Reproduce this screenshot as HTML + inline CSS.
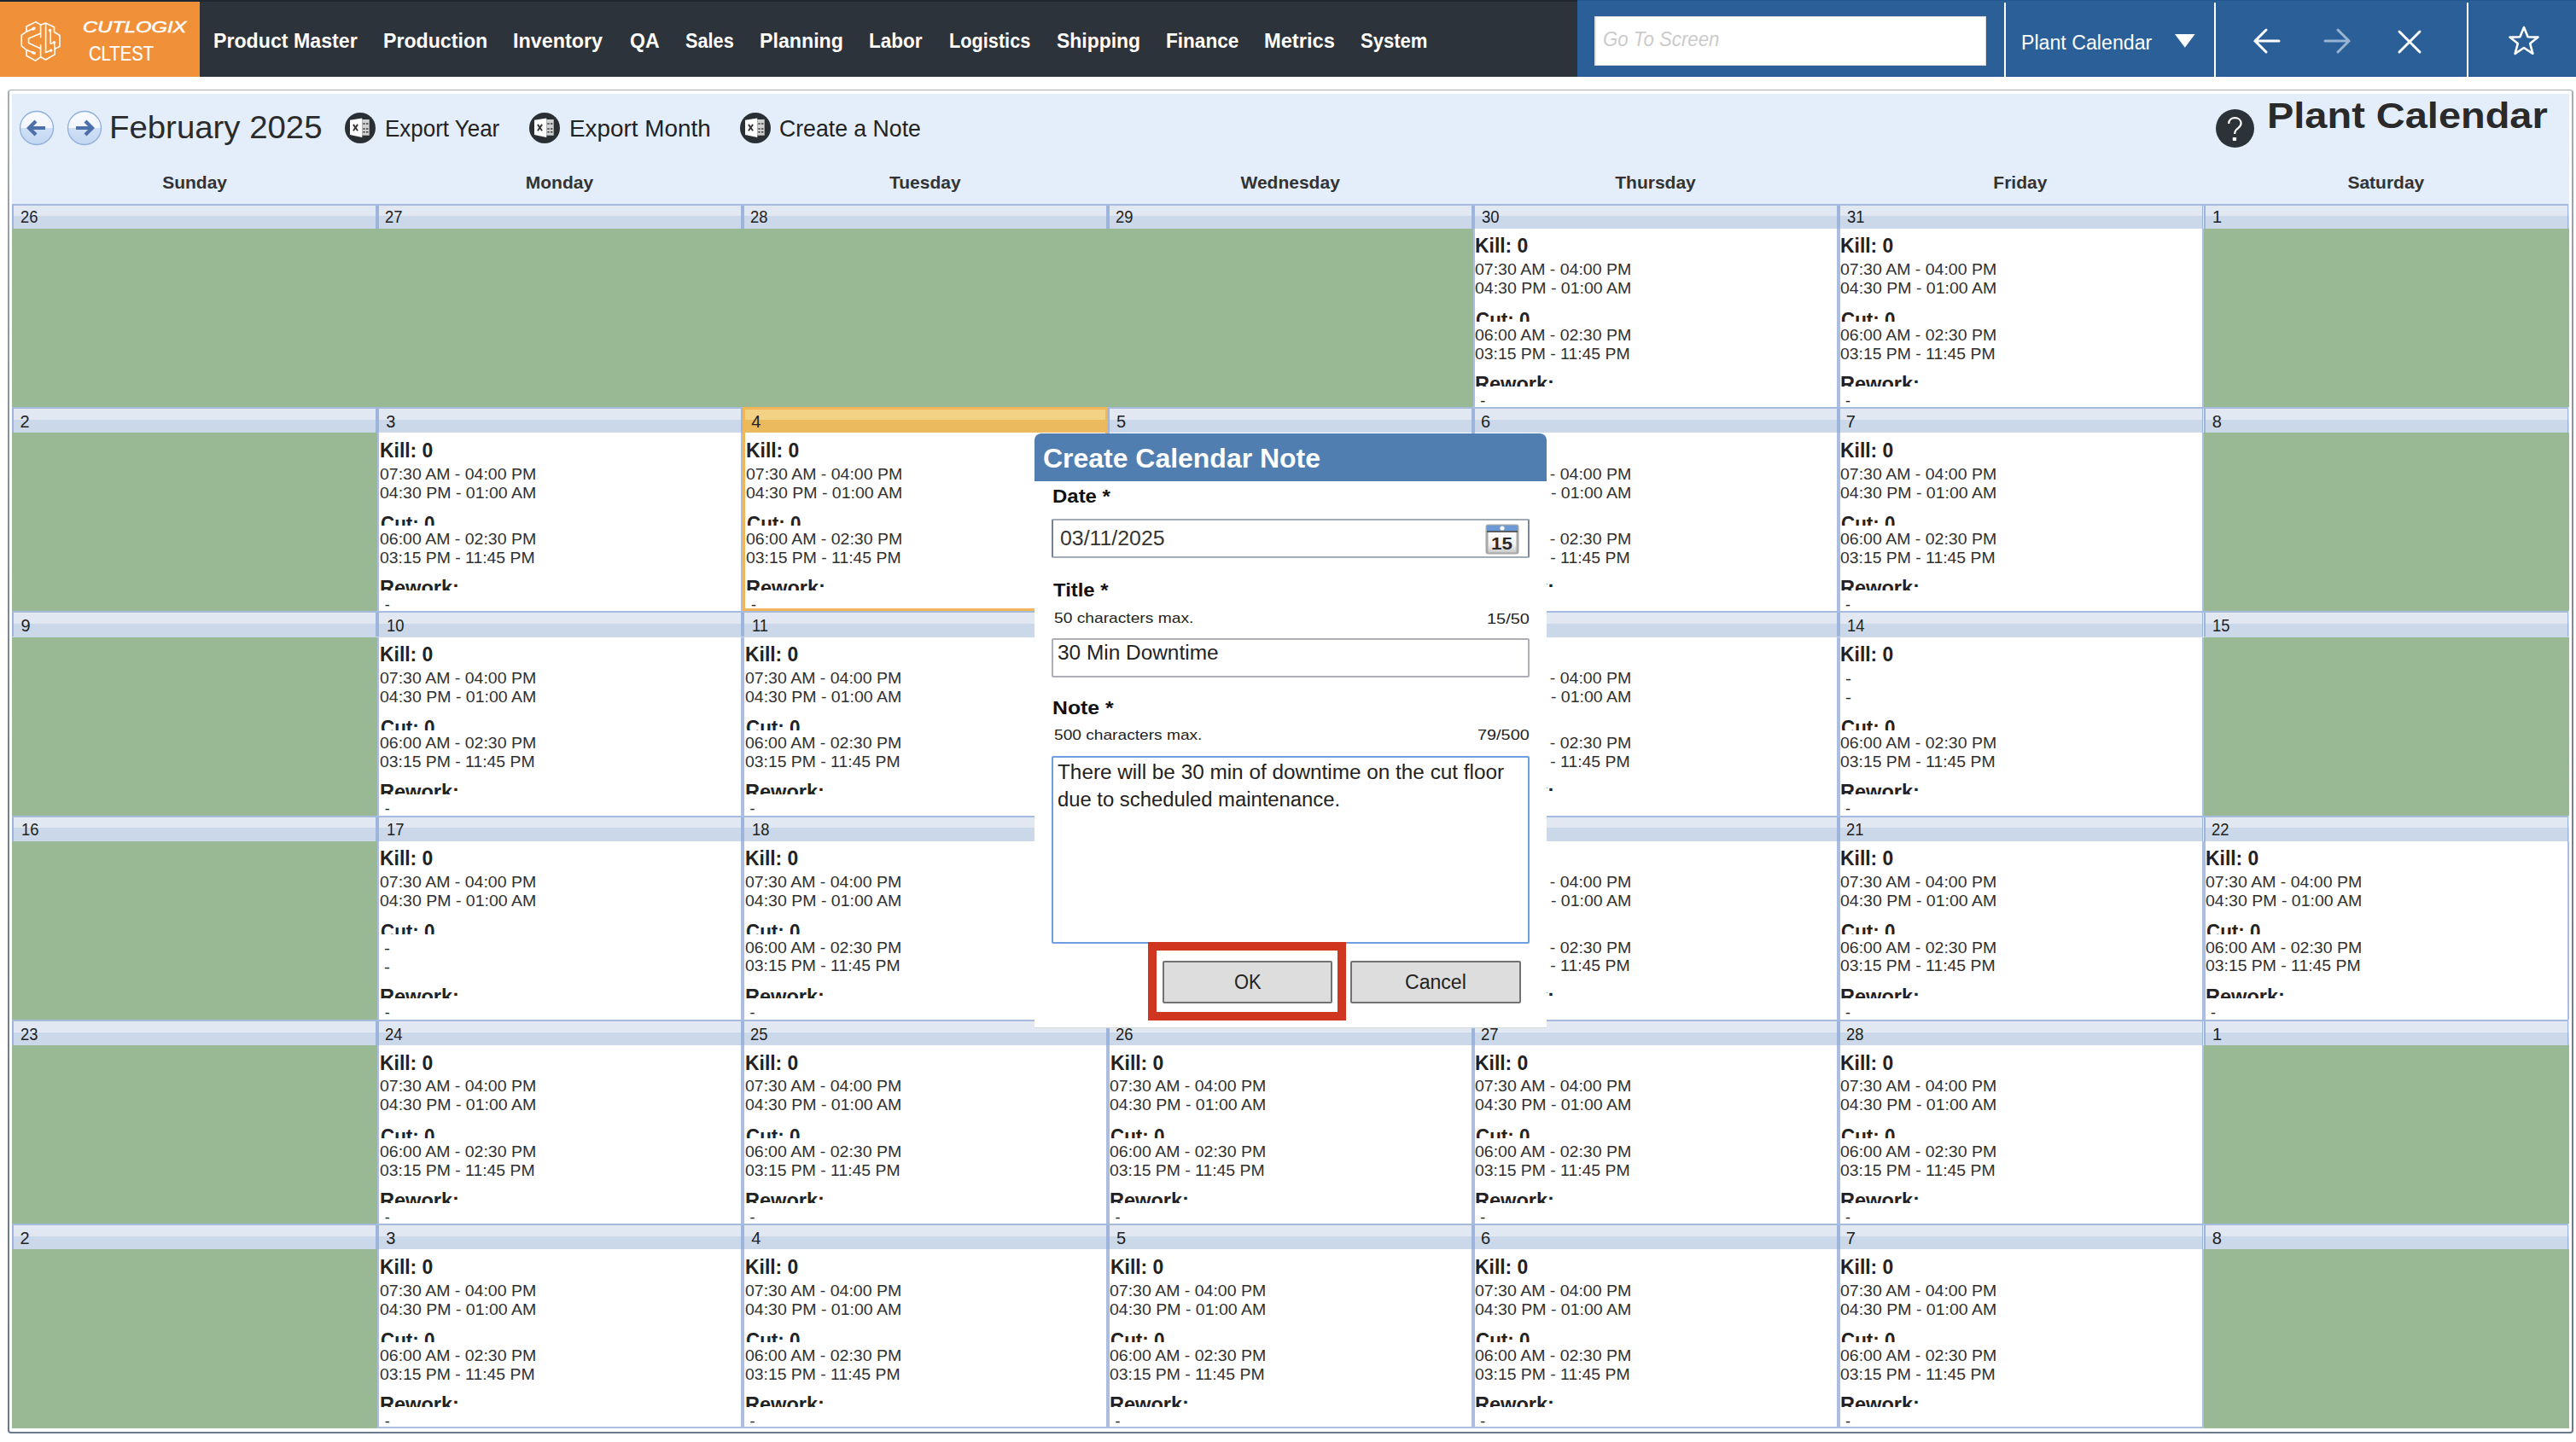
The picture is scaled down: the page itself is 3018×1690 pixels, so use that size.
<!DOCTYPE html>
<html><head><meta charset="utf-8"><title>Plant Calendar</title>
<style>
html,body{margin:0;padding:0;}
body{width:3018px;height:1690px;position:relative;overflow:hidden;background:#fff;font-family:'Liberation Sans',sans-serif;}
span{position:absolute;white-space:nowrap;transform-origin:0 0;}
div.c{position:absolute;overflow:hidden;}
</style></head><body>
<div style="position:absolute;left:0;top:0;width:3018px;height:90px;background:#2d333a"></div>
<div style="position:absolute;left:1848px;top:0;width:1170px;height:90px;background:#2b5f98"></div>
<div style="position:absolute;left:0;top:0;width:1848px;height:1.5px;background:#20262d"></div>
<div style="position:absolute;left:0;top:0;width:234px;height:2px;background:#1b2633"></div>
<div style="position:absolute;left:1848px;top:0;width:1170px;height:1px;background:#255791"></div>
<div style="position:absolute;left:1848px;top:89px;width:1170px;height:1px;background:#23558f"></div>
<div style="position:absolute;left:0;top:2px;width:234px;height:88px;background:#f0913a"></div>
<svg style="position:absolute;left:18px;top:20px" width="60" height="58" viewBox="0 0 60 58" fill="none" stroke="#fff" stroke-width="1.6" stroke-linejoin="round" stroke-linecap="round">
<path d="M24,5.6 L13,11 L13,17.2 L7.25,21.1 L7.25,33.8 L13,38.5 L13,45.3 L23.5,51.1 L29.6,46.8 L35.4,50 L46.2,43.9 L46.2,37.4 L52,34.5 L52,21.5 L45.5,17.5 L45.5,11.7 L35.4,7.05 L29.6,9.2 L24,5.6"/>
<path d="M29.6,9.2 V23.7 M29.6,32.7 V46.8"/>
<path d="M29.3,19.3 L15.6,25.1 L15.6,30.5 L29.3,36.7"/>
<path d="M13,17.2 L20.5,13.8 M13,38.5 L20.8,41.8"/>
<path d="M35.6,8.1 V41.4 L41.3,39.3"/>
<path d="M41.2,16 V31.2 L45.5,29.8 L46.2,37.4"/>
<g fill="#fff" stroke="none"><ellipse cx="21.3" cy="13.6" rx="2.6" ry="1.7" transform="rotate(-25 21.3 13.6)"/><ellipse cx="21.5" cy="42" rx="2.6" ry="1.7" transform="rotate(25 21.5 42)"/><circle cx="40.6" cy="15.5" r="1.8"/><circle cx="45.5" cy="29.6" r="1.7"/><circle cx="41.8" cy="39.1" r="1.7"/></g>
</svg>
<span style="left:97.18px;top:22.96px;font:italic normal 18px/18px 'Liberation Sans';color:#fff;transform:scaleX(1.3184);-webkit-text-stroke:0.5px #fff;">CUTLOGIX</span>
<span style="left:103.74px;top:52.02px;font:normal normal 23.6px/23.6px 'Liberation Sans';color:#fff;transform:scaleX(0.8569);-webkit-text-stroke:0.2px #fff;">CLTEST</span>
<span style="left:249.89px;top:36.53px;font:normal bold 23px/23px 'Liberation Sans';color:#fff;transform:scaleX(1.0074);">Product Master</span>
<span style="left:448.59px;top:36.53px;font:normal bold 23px/23px 'Liberation Sans';color:#fff;transform:scaleX(1.0065);">Production</span>
<span style="left:600.68px;top:36.53px;font:normal bold 23px/23px 'Liberation Sans';color:#fff;transform:scaleX(1.0153);">Inventory</span>
<span style="left:738.00px;top:36.53px;font:normal bold 23px/23px 'Liberation Sans';color:#fff;transform:scaleX(1.0032);">QA</span>
<span style="left:803.00px;top:36.53px;font:normal bold 23px/23px 'Liberation Sans';color:#fff;transform:scaleX(0.9441);">Sales</span>
<span style="left:889.59px;top:36.53px;font:normal bold 23px/23px 'Liberation Sans';color:#fff;transform:scaleX(1.0088);">Planning</span>
<span style="left:1017.92px;top:36.53px;font:normal bold 23px/23px 'Liberation Sans';color:#fff;transform:scaleX(0.9787);">Labor</span>
<span style="left:1111.86px;top:36.53px;font:normal bold 23px/23px 'Liberation Sans';color:#fff;transform:scaleX(0.9438);">Logistics</span>
<span style="left:1237.60px;top:36.53px;font:normal bold 23px/23px 'Liberation Sans';color:#fff;transform:scaleX(0.9967);">Shipping</span>
<span style="left:1366.02px;top:36.53px;font:normal bold 23px/23px 'Liberation Sans';color:#fff;transform:scaleX(0.9821);">Finance</span>
<span style="left:1480.97px;top:36.53px;font:normal bold 23px/23px 'Liberation Sans';color:#fff;transform:scaleX(1.0287);">Metrics</span>
<span style="left:1594.00px;top:36.53px;font:normal bold 23px/23px 'Liberation Sans';color:#fff;transform:scaleX(0.9585);">System</span>
<div style="position:absolute;left:1868px;top:19px;width:459px;height:58px;background:#fff;box-sizing:border-box;border:1px solid #d8d8d8;border-left:2px solid #e0e0e0"></div>
<span style="left:1878.08px;top:33.73px;font:italic normal 24.3px/24.3px 'Liberation Sans';color:#cbcbcb;transform:scaleX(0.9152);">Go To Screen</span>
<div style="position:absolute;left:2347.5px;top:3px;width:2px;height:87px;background:#fff"></div>
<div style="position:absolute;left:2593.5px;top:3px;width:2px;height:87px;background:#fff"></div>
<div style="position:absolute;left:2889.5px;top:3px;width:2px;height:87px;background:#fff"></div>
<span style="left:2367.99px;top:38.53px;font:normal normal 23px/23px 'Liberation Sans';color:#fff;transform:scaleX(1.0073);">Plant Calendar</span>
<svg style="position:absolute;left:2546px;top:39px" width="28" height="18"><path d="M2,1 L25.6,1 L13.8,16.8 Z" fill="#fff"/></svg>
<svg style="position:absolute;left:2636px;top:28px" width="40" height="40" viewBox="0 0 40 40" fill="none" stroke="#fff" stroke-width="3" stroke-linecap="round"><path d="M34,20 L6,20 M19,7 L6,20 L19,33"/></svg>
<svg style="position:absolute;left:2719px;top:28px" width="40" height="40" viewBox="0 0 40 40" fill="none" stroke="#98b4d2" stroke-width="3" stroke-linecap="round"><path d="M5,20 L33,20 M20,7 L33,20 L20,33"/></svg>
<svg style="position:absolute;left:2803px;top:29px" width="40" height="40" viewBox="0 0 40 40" fill="none" stroke="#fff" stroke-width="3" stroke-linecap="round"><path d="M8,8 L32,32 M32,8 L8,32"/></svg>
<svg style="position:absolute;left:2937px;top:29px" width="40" height="38" viewBox="0 0 40 38" fill="none" stroke="#fff" stroke-width="2.6" stroke-linejoin="round"><path d="M20,3 L24.6,14.2 L36.5,14.6 L27.2,22 L30.4,33.8 L20,27 L9.6,33.8 L12.8,22 L3.5,14.6 L15.4,14.2 Z"/></svg>
<div style="position:absolute;left:8.5px;top:104.7px;width:3006.5px;height:1575px;border-radius:4px;background:linear-gradient(#a7aeb9,#8f9aa7 15%,#76828f 50%,#687a8c)"></div>
<div style="position:absolute;left:10.6px;top:106.4px;width:3002.4px;height:1571.3px;border-radius:2px;background:#fff"></div>
<div style="position:absolute;left:14px;top:110px;width:2995.5px;height:1564px;background:#e4eefb"></div>
<svg style="position:absolute;left:21.5px;top:129px" width="42" height="42" viewBox="0 0 42 42">
<defs><linearGradient id="g42.5" x1="0" y1="0" x2="0" y2="1"><stop offset="0" stop-color="#f7fafe"/><stop offset="0.5" stop-color="#f2f6fc"/><stop offset="0.5" stop-color="#cfe0f6"/><stop offset="1" stop-color="#c3d7f2"/></linearGradient></defs>
<circle cx="21" cy="21" r="19.5" fill="url(#g42.5)" stroke="#8eaedb" stroke-width="1.3"/>
<path d="M31,21 L12,21 M20,13 L12,21 L20,29" fill="none" stroke="#4d70aa" stroke-width="4.2" stroke-linejoin="miter"/></svg>
<svg style="position:absolute;left:77.5px;top:129px" width="42" height="42" viewBox="0 0 42 42">
<defs><linearGradient id="g98.5" x1="0" y1="0" x2="0" y2="1"><stop offset="0" stop-color="#f7fafe"/><stop offset="0.5" stop-color="#f2f6fc"/><stop offset="0.5" stop-color="#cfe0f6"/><stop offset="1" stop-color="#c3d7f2"/></linearGradient></defs>
<circle cx="21" cy="21" r="19.5" fill="url(#g98.5)" stroke="#8eaedb" stroke-width="1.3"/>
<path d="M11,21 L30,21 M22,13 L30,21 L22,29" fill="none" stroke="#4d70aa" stroke-width="4.2" stroke-linejoin="miter"/></svg>
<span style="left:127.89px;top:130.58px;font:normal normal 37px/37px 'Liberation Sans';color:#2b2b2b;transform:scaleX(1.0368);">February 2025</span>
<svg style="position:absolute;left:404px;top:132.10000000000002px" width="36" height="36" viewBox="0 0 36 36">
<circle cx="18" cy="18" r="18" fill="#2a2f33"/>
<path d="M6,8.7 L20.3,6.4 L20.3,29 L6,26 Z" fill="#fff"/>
<rect x="20.3" y="8" width="8.4" height="18.7" fill="#d0d0d0"/>
<path d="M21.3,13 h2.4 M25,13 h2.4 M21.3,19 h2.4 M25,19 h2.4 M21.3,22.7 h2.4 M25,22.7 h2.4" stroke="#3a3a3a" stroke-width="1.6"/>
<path d="M9.9,13.9 L15.1,21.2 M15.1,13.9 L9.9,21.2" stroke="#333" stroke-width="1.9"/>
</svg>
<span style="left:450.71px;top:137.02px;font:normal normal 27.5px/27.5px 'Liberation Sans';color:#222;transform:scaleX(0.9443);">Export Year</span>
<svg style="position:absolute;left:619.7px;top:132.10000000000002px" width="36" height="36" viewBox="0 0 36 36">
<circle cx="18" cy="18" r="18" fill="#2a2f33"/>
<path d="M6,8.7 L20.3,6.4 L20.3,29 L6,26 Z" fill="#fff"/>
<rect x="20.3" y="8" width="8.4" height="18.7" fill="#d0d0d0"/>
<path d="M21.3,13 h2.4 M25,13 h2.4 M21.3,19 h2.4 M25,19 h2.4 M21.3,22.7 h2.4 M25,22.7 h2.4" stroke="#3a3a3a" stroke-width="1.6"/>
<path d="M9.9,13.9 L15.1,21.2 M15.1,13.9 L9.9,21.2" stroke="#333" stroke-width="1.9"/>
</svg>
<span style="left:666.67px;top:137.02px;font:normal normal 27.5px/27.5px 'Liberation Sans';color:#222;transform:scaleX(1.0128);">Export Month</span>
<svg style="position:absolute;left:866.5px;top:132.10000000000002px" width="36" height="36" viewBox="0 0 36 36">
<circle cx="18" cy="18" r="18" fill="#2a2f33"/>
<path d="M6,8.7 L20.3,6.4 L20.3,29 L6,26 Z" fill="#fff"/>
<rect x="20.3" y="8" width="8.4" height="18.7" fill="#d0d0d0"/>
<path d="M21.3,13 h2.4 M25,13 h2.4 M21.3,19 h2.4 M25,19 h2.4 M21.3,22.7 h2.4 M25,22.7 h2.4" stroke="#3a3a3a" stroke-width="1.6"/>
<path d="M9.9,13.9 L15.1,21.2 M15.1,13.9 L9.9,21.2" stroke="#333" stroke-width="1.9"/>
</svg>
<span style="left:913.33px;top:137.02px;font:normal normal 27.5px/27.5px 'Liberation Sans';color:#222;transform:scaleX(0.9688);">Create a Note</span>
<div style="position:absolute;left:2596px;top:127.5px;width:45px;height:45px;border-radius:50%;background:#2c3338"></div>
<svg style="position:absolute;left:2596px;top:127.5px" width="45" height="45" viewBox="0 0 45 45" fill="none" stroke="#fff" stroke-width="2.2"><path d="M15.2,17 C15.2,12.5 18.5,10.2 22.3,10.2 C26.5,10.2 29.6,12.8 29.6,16.6 C29.6,20.5 26,22 24,24 C22.6,25.4 22.2,26.5 22.2,29"/><rect x="19.8" y="33" width="4.3" height="3.9" rx="0.6" fill="#fff" stroke="none"/></svg>
<span style="left:2656.46px;top:115.05px;font:normal bold 42px/42px 'Liberation Sans';color:#2a2a2a;transform:scaleX(1.1178);">Plant Calendar</span>
<span style="left:190.15px;top:202.52px;font:normal bold 21px/21px 'Liberation Sans';color:#333;">Sunday</span>
<span style="left:615.76px;top:202.52px;font:normal bold 21px/21px 'Liberation Sans';color:#333;">Monday</span>
<span style="left:1041.97px;top:202.52px;font:normal bold 21px/21px 'Liberation Sans';color:#333;">Tuesday</span>
<span style="left:1453.49px;top:202.52px;font:normal bold 21px/21px 'Liberation Sans';color:#333;">Wednesday</span>
<span style="left:1892.25px;top:202.52px;font:normal bold 21px/21px 'Liberation Sans';color:#333;">Thursday</span>
<span style="left:2335.36px;top:202.52px;font:normal bold 21px/21px 'Liberation Sans';color:#333;">Friday</span>
<span style="left:2750.39px;top:202.52px;font:normal bold 21px/21px 'Liberation Sans';color:#333;">Saturday</span>
<div style="position:absolute;left:14.3px;top:238.5px;width:2995px;height:2px;background:#a5badd"></div>
<div style="position:absolute;left:14.3px;top:240.5px;width:427.9px;height:12.0px;background:#e1e8f2"></div>
<div style="position:absolute;left:14.3px;top:252.5px;width:427.9px;height:15.5px;background:#cbd8ea"></div>
<div style="position:absolute;left:14.3px;top:240.5px;width:2px;height:27.5px;background:#9db4dc"></div>
<div style="position:absolute;left:440.4px;top:240.5px;width:1.8px;height:27.5px;background:#9db4dc"></div>
<div style="position:absolute;left:14.3px;top:268.0px;width:427.9px;height:209.1px;background:#99b894"></div>
<span style="left:23.58px;top:244.47px;font:normal normal 20px/20px 'Liberation Sans';color:#222;transform:scaleX(0.9200);">26</span>
<div style="position:absolute;left:442.2px;top:240.5px;width:427.9px;height:12.0px;background:#e1e8f2"></div>
<div style="position:absolute;left:442.2px;top:252.5px;width:427.9px;height:15.5px;background:#cbd8ea"></div>
<div style="position:absolute;left:442.2px;top:240.5px;width:2px;height:27.5px;background:#9db4dc"></div>
<div style="position:absolute;left:868.2px;top:240.5px;width:1.8px;height:27.5px;background:#9db4dc"></div>
<div style="position:absolute;left:442.2px;top:268.0px;width:427.9px;height:209.1px;background:#99b894"></div>
<span style="left:451.44px;top:244.47px;font:normal normal 20px/20px 'Liberation Sans';color:#222;transform:scaleX(0.9200);">27</span>
<div style="position:absolute;left:870.0px;top:240.5px;width:427.9px;height:12.0px;background:#e1e8f2"></div>
<div style="position:absolute;left:870.0px;top:252.5px;width:427.9px;height:15.5px;background:#cbd8ea"></div>
<div style="position:absolute;left:870.0px;top:240.5px;width:2px;height:27.5px;background:#9db4dc"></div>
<div style="position:absolute;left:1296.1px;top:240.5px;width:1.8px;height:27.5px;background:#9db4dc"></div>
<div style="position:absolute;left:870.0px;top:268.0px;width:427.9px;height:209.1px;background:#99b894"></div>
<span style="left:879.30px;top:244.47px;font:normal normal 20px/20px 'Liberation Sans';color:#222;transform:scaleX(0.9200);">28</span>
<div style="position:absolute;left:1297.9px;top:240.5px;width:427.9px;height:12.0px;background:#e1e8f2"></div>
<div style="position:absolute;left:1297.9px;top:252.5px;width:427.9px;height:15.5px;background:#cbd8ea"></div>
<div style="position:absolute;left:1297.9px;top:240.5px;width:2px;height:27.5px;background:#9db4dc"></div>
<div style="position:absolute;left:1723.9px;top:240.5px;width:1.8px;height:27.5px;background:#9db4dc"></div>
<div style="position:absolute;left:1297.9px;top:268.0px;width:427.9px;height:209.1px;background:#99b894"></div>
<span style="left:1307.16px;top:244.47px;font:normal normal 20px/20px 'Liberation Sans';color:#222;transform:scaleX(0.9200);">29</span>
<div style="position:absolute;left:1725.7px;top:240.5px;width:427.9px;height:12.0px;background:#e1e8f2"></div>
<div style="position:absolute;left:1725.7px;top:252.5px;width:427.9px;height:15.5px;background:#cbd8ea"></div>
<div style="position:absolute;left:1725.7px;top:240.5px;width:2px;height:27.5px;background:#9db4dc"></div>
<div style="position:absolute;left:2151.8px;top:240.5px;width:1.8px;height:27.5px;background:#9db4dc"></div>
<div style="position:absolute;left:1725.7px;top:268.0px;width:427.9px;height:209.1px;background:#fff"></div>
<div style="position:absolute;left:1725.7px;top:268.0px;width:2.2px;height:209.1px;background:#abbee0"></div>
<div style="position:absolute;left:2151.6px;top:268.0px;width:2px;height:209.1px;background:#abbee0"></div>
<span style="left:1735.94px;top:244.47px;font:normal normal 20px/20px 'Liberation Sans';color:#222;transform:scaleX(0.9200);">30</span>
<div style="position:absolute;left:2153.6px;top:240.5px;width:427.9px;height:12.0px;background:#e1e8f2"></div>
<div style="position:absolute;left:2153.6px;top:252.5px;width:427.9px;height:15.5px;background:#cbd8ea"></div>
<div style="position:absolute;left:2153.6px;top:240.5px;width:2px;height:27.5px;background:#9db4dc"></div>
<div style="position:absolute;left:2579.7px;top:240.5px;width:1.8px;height:27.5px;background:#9db4dc"></div>
<div style="position:absolute;left:2153.6px;top:268.0px;width:427.9px;height:209.1px;background:#fff"></div>
<div style="position:absolute;left:2153.6px;top:268.0px;width:2.2px;height:209.1px;background:#abbee0"></div>
<div style="position:absolute;left:2579.5px;top:268.0px;width:2px;height:209.1px;background:#abbee0"></div>
<span style="left:2163.80px;top:244.47px;font:normal normal 20px/20px 'Liberation Sans';color:#222;transform:scaleX(0.9200);">31</span>
<div style="position:absolute;left:2581.5px;top:240.5px;width:428.0px;height:12.0px;background:#e1e8f2"></div>
<div style="position:absolute;left:2581.5px;top:252.5px;width:428.0px;height:15.5px;background:#cbd8ea"></div>
<div style="position:absolute;left:2581.5px;top:240.5px;width:2px;height:27.5px;background:#9db4dc"></div>
<div style="position:absolute;left:3007.7px;top:240.5px;width:1.8px;height:27.5px;background:#9db4dc"></div>
<div style="position:absolute;left:2581.5px;top:268.0px;width:428.0px;height:209.1px;background:#99b894"></div>
<span style="left:2592.06px;top:244.47px;font:normal normal 20px/20px 'Liberation Sans';color:#222;">1</span>
<div style="position:absolute;left:14.3px;top:477.1px;width:2995px;height:2px;background:#a5badd"></div>
<div style="position:absolute;left:14.3px;top:479.1px;width:427.9px;height:12.7px;background:#e1e8f2"></div>
<div style="position:absolute;left:14.3px;top:491.8px;width:427.9px;height:15.5px;background:#cbd8ea"></div>
<div style="position:absolute;left:14.3px;top:479.1px;width:2px;height:28.2px;background:#9db4dc"></div>
<div style="position:absolute;left:440.4px;top:479.1px;width:1.8px;height:28.2px;background:#9db4dc"></div>
<div style="position:absolute;left:14.3px;top:507.3px;width:427.9px;height:209.1px;background:#99b894"></div>
<span style="left:23.50px;top:483.73px;font:normal normal 20px/20px 'Liberation Sans';color:#222;">2</span>
<div style="position:absolute;left:442.2px;top:479.1px;width:427.9px;height:12.7px;background:#e1e8f2"></div>
<div style="position:absolute;left:442.2px;top:491.8px;width:427.9px;height:15.5px;background:#cbd8ea"></div>
<div style="position:absolute;left:442.2px;top:479.1px;width:2px;height:28.2px;background:#9db4dc"></div>
<div style="position:absolute;left:868.2px;top:479.1px;width:1.8px;height:28.2px;background:#9db4dc"></div>
<div style="position:absolute;left:442.2px;top:507.3px;width:427.9px;height:209.1px;background:#fff"></div>
<div style="position:absolute;left:442.2px;top:507.3px;width:2.2px;height:209.1px;background:#abbee0"></div>
<div style="position:absolute;left:868.0px;top:507.3px;width:2px;height:209.1px;background:#abbee0"></div>
<span style="left:452.36px;top:483.73px;font:normal normal 20px/20px 'Liberation Sans';color:#222;">3</span>
<div style="position:absolute;left:870.0px;top:479.1px;width:427.9px;height:12.7px;background:#f2d386"></div>
<div style="position:absolute;left:870.0px;top:491.8px;width:427.9px;height:15.5px;background:#ebb95e"></div>
<div style="position:absolute;left:870.0px;top:479.1px;width:2px;height:28.2px;background:#9db4dc"></div>
<div style="position:absolute;left:1296.1px;top:479.1px;width:1.8px;height:28.2px;background:#9db4dc"></div>
<div style="position:absolute;left:870.0px;top:507.3px;width:427.9px;height:209.1px;background:#fff"></div>
<div style="position:absolute;left:870.0px;top:507.3px;width:2.2px;height:209.1px;background:#abbee0"></div>
<div style="position:absolute;left:1295.9px;top:507.3px;width:2px;height:209.1px;background:#abbee0"></div>
<span style="left:880.22px;top:483.73px;font:normal normal 20px/20px 'Liberation Sans';color:#222;">4</span>
<div style="position:absolute;left:870.0px;top:477.1px;width:427.9px;height:239.3px;box-sizing:border-box;border:3.8px solid #f0b657"></div>
<div style="position:absolute;left:1297.9px;top:479.1px;width:427.9px;height:12.7px;background:#e1e8f2"></div>
<div style="position:absolute;left:1297.9px;top:491.8px;width:427.9px;height:15.5px;background:#cbd8ea"></div>
<div style="position:absolute;left:1297.9px;top:479.1px;width:2px;height:28.2px;background:#9db4dc"></div>
<div style="position:absolute;left:1723.9px;top:479.1px;width:1.8px;height:28.2px;background:#9db4dc"></div>
<div style="position:absolute;left:1297.9px;top:507.3px;width:427.9px;height:209.1px;background:#fff"></div>
<div style="position:absolute;left:1297.9px;top:507.3px;width:2.2px;height:209.1px;background:#abbee0"></div>
<div style="position:absolute;left:1723.7px;top:507.3px;width:2px;height:209.1px;background:#abbee0"></div>
<span style="left:1308.08px;top:483.73px;font:normal normal 20px/20px 'Liberation Sans';color:#222;">5</span>
<div style="position:absolute;left:1725.7px;top:479.1px;width:427.9px;height:12.7px;background:#e1e8f2"></div>
<div style="position:absolute;left:1725.7px;top:491.8px;width:427.9px;height:15.5px;background:#cbd8ea"></div>
<div style="position:absolute;left:1725.7px;top:479.1px;width:2px;height:28.2px;background:#9db4dc"></div>
<div style="position:absolute;left:2151.8px;top:479.1px;width:1.8px;height:28.2px;background:#9db4dc"></div>
<div style="position:absolute;left:1725.7px;top:507.3px;width:427.9px;height:209.1px;background:#fff"></div>
<div style="position:absolute;left:1725.7px;top:507.3px;width:2.2px;height:209.1px;background:#abbee0"></div>
<div style="position:absolute;left:2151.6px;top:507.3px;width:2px;height:209.1px;background:#abbee0"></div>
<span style="left:1734.94px;top:483.73px;font:normal normal 20px/20px 'Liberation Sans';color:#222;">6</span>
<div style="position:absolute;left:2153.6px;top:479.1px;width:427.9px;height:12.7px;background:#e1e8f2"></div>
<div style="position:absolute;left:2153.6px;top:491.8px;width:427.9px;height:15.5px;background:#cbd8ea"></div>
<div style="position:absolute;left:2153.6px;top:479.1px;width:2px;height:28.2px;background:#9db4dc"></div>
<div style="position:absolute;left:2579.7px;top:479.1px;width:1.8px;height:28.2px;background:#9db4dc"></div>
<div style="position:absolute;left:2153.6px;top:507.3px;width:427.9px;height:209.1px;background:#fff"></div>
<div style="position:absolute;left:2153.6px;top:507.3px;width:2.2px;height:209.1px;background:#abbee0"></div>
<div style="position:absolute;left:2579.5px;top:507.3px;width:2px;height:209.1px;background:#abbee0"></div>
<span style="left:2162.80px;top:483.73px;font:normal normal 20px/20px 'Liberation Sans';color:#222;">7</span>
<div style="position:absolute;left:2581.5px;top:479.1px;width:428.0px;height:12.7px;background:#e1e8f2"></div>
<div style="position:absolute;left:2581.5px;top:491.8px;width:428.0px;height:15.5px;background:#cbd8ea"></div>
<div style="position:absolute;left:2581.5px;top:479.1px;width:2px;height:28.2px;background:#9db4dc"></div>
<div style="position:absolute;left:3007.7px;top:479.1px;width:1.8px;height:28.2px;background:#9db4dc"></div>
<div style="position:absolute;left:2581.5px;top:507.3px;width:428.0px;height:209.1px;background:#99b894"></div>
<span style="left:2591.66px;top:483.73px;font:normal normal 20px/20px 'Liberation Sans';color:#222;">8</span>
<div style="position:absolute;left:14.3px;top:716.3px;width:2995px;height:2px;background:#a5badd"></div>
<div style="position:absolute;left:14.3px;top:718.3px;width:427.9px;height:12.7px;background:#e1e8f2"></div>
<div style="position:absolute;left:14.3px;top:731.0px;width:427.9px;height:15.5px;background:#cbd8ea"></div>
<div style="position:absolute;left:14.3px;top:718.3px;width:2px;height:28.2px;background:#9db4dc"></div>
<div style="position:absolute;left:440.4px;top:718.3px;width:1.8px;height:28.2px;background:#9db4dc"></div>
<div style="position:absolute;left:14.3px;top:746.5px;width:427.9px;height:209.1px;background:#99b894"></div>
<span style="left:24.50px;top:722.99px;font:normal normal 20px/20px 'Liberation Sans';color:#222;">9</span>
<div style="position:absolute;left:442.2px;top:718.3px;width:427.9px;height:12.7px;background:#e1e8f2"></div>
<div style="position:absolute;left:442.2px;top:731.0px;width:427.9px;height:15.5px;background:#cbd8ea"></div>
<div style="position:absolute;left:442.2px;top:718.3px;width:2px;height:28.2px;background:#9db4dc"></div>
<div style="position:absolute;left:868.2px;top:718.3px;width:1.8px;height:28.2px;background:#9db4dc"></div>
<div style="position:absolute;left:442.2px;top:746.5px;width:427.9px;height:209.1px;background:#fff"></div>
<div style="position:absolute;left:442.2px;top:746.5px;width:2.2px;height:209.1px;background:#abbee0"></div>
<div style="position:absolute;left:868.0px;top:746.5px;width:2px;height:209.1px;background:#abbee0"></div>
<span style="left:452.84px;top:722.99px;font:normal normal 20px/20px 'Liberation Sans';color:#222;transform:scaleX(0.9200);">10</span>
<div style="position:absolute;left:870.0px;top:718.3px;width:427.9px;height:12.7px;background:#e1e8f2"></div>
<div style="position:absolute;left:870.0px;top:731.0px;width:427.9px;height:15.5px;background:#cbd8ea"></div>
<div style="position:absolute;left:870.0px;top:718.3px;width:2px;height:28.2px;background:#9db4dc"></div>
<div style="position:absolute;left:1296.1px;top:718.3px;width:1.8px;height:28.2px;background:#9db4dc"></div>
<div style="position:absolute;left:870.0px;top:746.5px;width:427.9px;height:209.1px;background:#fff"></div>
<div style="position:absolute;left:870.0px;top:746.5px;width:2.2px;height:209.1px;background:#abbee0"></div>
<div style="position:absolute;left:1295.9px;top:746.5px;width:2px;height:209.1px;background:#abbee0"></div>
<span style="left:880.70px;top:722.99px;font:normal normal 20px/20px 'Liberation Sans';color:#222;transform:scaleX(0.9200);">11</span>
<div style="position:absolute;left:1297.9px;top:718.3px;width:427.9px;height:12.7px;background:#e1e8f2"></div>
<div style="position:absolute;left:1297.9px;top:731.0px;width:427.9px;height:15.5px;background:#cbd8ea"></div>
<div style="position:absolute;left:1297.9px;top:718.3px;width:2px;height:28.2px;background:#9db4dc"></div>
<div style="position:absolute;left:1723.9px;top:718.3px;width:1.8px;height:28.2px;background:#9db4dc"></div>
<div style="position:absolute;left:1297.9px;top:746.5px;width:427.9px;height:209.1px;background:#fff"></div>
<div style="position:absolute;left:1297.9px;top:746.5px;width:2.2px;height:209.1px;background:#abbee0"></div>
<div style="position:absolute;left:1723.7px;top:746.5px;width:2px;height:209.1px;background:#abbee0"></div>
<span style="left:1308.56px;top:722.99px;font:normal normal 20px/20px 'Liberation Sans';color:#222;transform:scaleX(0.9200);">12</span>
<div style="position:absolute;left:1725.7px;top:718.3px;width:427.9px;height:12.7px;background:#e1e8f2"></div>
<div style="position:absolute;left:1725.7px;top:731.0px;width:427.9px;height:15.5px;background:#cbd8ea"></div>
<div style="position:absolute;left:1725.7px;top:718.3px;width:2px;height:28.2px;background:#9db4dc"></div>
<div style="position:absolute;left:2151.8px;top:718.3px;width:1.8px;height:28.2px;background:#9db4dc"></div>
<div style="position:absolute;left:1725.7px;top:746.5px;width:427.9px;height:209.1px;background:#fff"></div>
<div style="position:absolute;left:1725.7px;top:746.5px;width:2.2px;height:209.1px;background:#abbee0"></div>
<div style="position:absolute;left:2151.6px;top:746.5px;width:2px;height:209.1px;background:#abbee0"></div>
<span style="left:1736.42px;top:722.99px;font:normal normal 20px/20px 'Liberation Sans';color:#222;transform:scaleX(0.9200);">13</span>
<div style="position:absolute;left:2153.6px;top:718.3px;width:427.9px;height:12.7px;background:#e1e8f2"></div>
<div style="position:absolute;left:2153.6px;top:731.0px;width:427.9px;height:15.5px;background:#cbd8ea"></div>
<div style="position:absolute;left:2153.6px;top:718.3px;width:2px;height:28.2px;background:#9db4dc"></div>
<div style="position:absolute;left:2579.7px;top:718.3px;width:1.8px;height:28.2px;background:#9db4dc"></div>
<div style="position:absolute;left:2153.6px;top:746.5px;width:427.9px;height:209.1px;background:#fff"></div>
<div style="position:absolute;left:2153.6px;top:746.5px;width:2.2px;height:209.1px;background:#abbee0"></div>
<div style="position:absolute;left:2579.5px;top:746.5px;width:2px;height:209.1px;background:#abbee0"></div>
<span style="left:2164.28px;top:722.99px;font:normal normal 20px/20px 'Liberation Sans';color:#222;transform:scaleX(0.9200);">14</span>
<div style="position:absolute;left:2581.5px;top:718.3px;width:428.0px;height:12.7px;background:#e1e8f2"></div>
<div style="position:absolute;left:2581.5px;top:731.0px;width:428.0px;height:15.5px;background:#cbd8ea"></div>
<div style="position:absolute;left:2581.5px;top:718.3px;width:2px;height:28.2px;background:#9db4dc"></div>
<div style="position:absolute;left:3007.7px;top:718.3px;width:1.8px;height:28.2px;background:#9db4dc"></div>
<div style="position:absolute;left:2581.5px;top:746.5px;width:428.0px;height:209.1px;background:#99b894"></div>
<span style="left:2592.14px;top:722.99px;font:normal normal 20px/20px 'Liberation Sans';color:#222;transform:scaleX(0.9200);">15</span>
<div style="position:absolute;left:14.3px;top:955.6px;width:2995px;height:2px;background:#a5badd"></div>
<div style="position:absolute;left:14.3px;top:957.6px;width:427.9px;height:12.7px;background:#e1e8f2"></div>
<div style="position:absolute;left:14.3px;top:970.3px;width:427.9px;height:15.5px;background:#cbd8ea"></div>
<div style="position:absolute;left:14.3px;top:957.6px;width:2px;height:28.2px;background:#9db4dc"></div>
<div style="position:absolute;left:440.4px;top:957.6px;width:1.8px;height:28.2px;background:#9db4dc"></div>
<div style="position:absolute;left:14.3px;top:985.8px;width:427.9px;height:209.1px;background:#99b894"></div>
<span style="left:24.98px;top:962.25px;font:normal normal 20px/20px 'Liberation Sans';color:#222;transform:scaleX(0.9200);">16</span>
<div style="position:absolute;left:442.2px;top:957.6px;width:427.9px;height:12.7px;background:#e1e8f2"></div>
<div style="position:absolute;left:442.2px;top:970.3px;width:427.9px;height:15.5px;background:#cbd8ea"></div>
<div style="position:absolute;left:442.2px;top:957.6px;width:2px;height:28.2px;background:#9db4dc"></div>
<div style="position:absolute;left:868.2px;top:957.6px;width:1.8px;height:28.2px;background:#9db4dc"></div>
<div style="position:absolute;left:442.2px;top:985.8px;width:427.9px;height:209.1px;background:#fff"></div>
<div style="position:absolute;left:442.2px;top:985.8px;width:2.2px;height:209.1px;background:#abbee0"></div>
<div style="position:absolute;left:868.0px;top:985.8px;width:2px;height:209.1px;background:#abbee0"></div>
<span style="left:452.84px;top:962.25px;font:normal normal 20px/20px 'Liberation Sans';color:#222;transform:scaleX(0.9200);">17</span>
<div style="position:absolute;left:870.0px;top:957.6px;width:427.9px;height:12.7px;background:#e1e8f2"></div>
<div style="position:absolute;left:870.0px;top:970.3px;width:427.9px;height:15.5px;background:#cbd8ea"></div>
<div style="position:absolute;left:870.0px;top:957.6px;width:2px;height:28.2px;background:#9db4dc"></div>
<div style="position:absolute;left:1296.1px;top:957.6px;width:1.8px;height:28.2px;background:#9db4dc"></div>
<div style="position:absolute;left:870.0px;top:985.8px;width:427.9px;height:209.1px;background:#fff"></div>
<div style="position:absolute;left:870.0px;top:985.8px;width:2.2px;height:209.1px;background:#abbee0"></div>
<div style="position:absolute;left:1295.9px;top:985.8px;width:2px;height:209.1px;background:#abbee0"></div>
<span style="left:880.70px;top:962.25px;font:normal normal 20px/20px 'Liberation Sans';color:#222;transform:scaleX(0.9200);">18</span>
<div style="position:absolute;left:1297.9px;top:957.6px;width:427.9px;height:12.7px;background:#e1e8f2"></div>
<div style="position:absolute;left:1297.9px;top:970.3px;width:427.9px;height:15.5px;background:#cbd8ea"></div>
<div style="position:absolute;left:1297.9px;top:957.6px;width:2px;height:28.2px;background:#9db4dc"></div>
<div style="position:absolute;left:1723.9px;top:957.6px;width:1.8px;height:28.2px;background:#9db4dc"></div>
<div style="position:absolute;left:1297.9px;top:985.8px;width:427.9px;height:209.1px;background:#fff"></div>
<div style="position:absolute;left:1297.9px;top:985.8px;width:2.2px;height:209.1px;background:#abbee0"></div>
<div style="position:absolute;left:1723.7px;top:985.8px;width:2px;height:209.1px;background:#abbee0"></div>
<span style="left:1308.56px;top:962.25px;font:normal normal 20px/20px 'Liberation Sans';color:#222;transform:scaleX(0.9200);">19</span>
<div style="position:absolute;left:1725.7px;top:957.6px;width:427.9px;height:12.7px;background:#e1e8f2"></div>
<div style="position:absolute;left:1725.7px;top:970.3px;width:427.9px;height:15.5px;background:#cbd8ea"></div>
<div style="position:absolute;left:1725.7px;top:957.6px;width:2px;height:28.2px;background:#9db4dc"></div>
<div style="position:absolute;left:2151.8px;top:957.6px;width:1.8px;height:28.2px;background:#9db4dc"></div>
<div style="position:absolute;left:1725.7px;top:985.8px;width:427.9px;height:209.1px;background:#fff"></div>
<div style="position:absolute;left:1725.7px;top:985.8px;width:2.2px;height:209.1px;background:#abbee0"></div>
<div style="position:absolute;left:2151.6px;top:985.8px;width:2px;height:209.1px;background:#abbee0"></div>
<span style="left:1735.02px;top:962.25px;font:normal normal 20px/20px 'Liberation Sans';color:#222;transform:scaleX(0.9200);">20</span>
<div style="position:absolute;left:2153.6px;top:957.6px;width:427.9px;height:12.7px;background:#e1e8f2"></div>
<div style="position:absolute;left:2153.6px;top:970.3px;width:427.9px;height:15.5px;background:#cbd8ea"></div>
<div style="position:absolute;left:2153.6px;top:957.6px;width:2px;height:28.2px;background:#9db4dc"></div>
<div style="position:absolute;left:2579.7px;top:957.6px;width:1.8px;height:28.2px;background:#9db4dc"></div>
<div style="position:absolute;left:2153.6px;top:985.8px;width:427.9px;height:209.1px;background:#fff"></div>
<div style="position:absolute;left:2153.6px;top:985.8px;width:2.2px;height:209.1px;background:#abbee0"></div>
<div style="position:absolute;left:2579.5px;top:985.8px;width:2px;height:209.1px;background:#abbee0"></div>
<span style="left:2162.88px;top:962.25px;font:normal normal 20px/20px 'Liberation Sans';color:#222;transform:scaleX(0.9200);">21</span>
<div style="position:absolute;left:2581.5px;top:957.6px;width:428.0px;height:12.7px;background:#e1e8f2"></div>
<div style="position:absolute;left:2581.5px;top:970.3px;width:428.0px;height:15.5px;background:#cbd8ea"></div>
<div style="position:absolute;left:2581.5px;top:957.6px;width:2px;height:28.2px;background:#9db4dc"></div>
<div style="position:absolute;left:3007.7px;top:957.6px;width:1.8px;height:28.2px;background:#9db4dc"></div>
<div style="position:absolute;left:2581.5px;top:985.8px;width:428.0px;height:209.1px;background:#fff"></div>
<div style="position:absolute;left:2581.5px;top:985.8px;width:2.2px;height:209.1px;background:#abbee0"></div>
<div style="position:absolute;left:3007.5px;top:985.8px;width:2px;height:209.1px;background:#abbee0"></div>
<span style="left:2590.74px;top:962.25px;font:normal normal 20px/20px 'Liberation Sans';color:#222;transform:scaleX(0.9200);">22</span>
<div style="position:absolute;left:14.3px;top:1194.8px;width:2995px;height:2px;background:#a5badd"></div>
<div style="position:absolute;left:14.3px;top:1196.8px;width:427.9px;height:12.7px;background:#e1e8f2"></div>
<div style="position:absolute;left:14.3px;top:1209.5px;width:427.9px;height:15.5px;background:#cbd8ea"></div>
<div style="position:absolute;left:14.3px;top:1196.8px;width:2px;height:28.2px;background:#9db4dc"></div>
<div style="position:absolute;left:440.4px;top:1196.8px;width:1.8px;height:28.2px;background:#9db4dc"></div>
<div style="position:absolute;left:14.3px;top:1225.0px;width:427.9px;height:209.1px;background:#99b894"></div>
<span style="left:23.58px;top:1201.51px;font:normal normal 20px/20px 'Liberation Sans';color:#222;transform:scaleX(0.9200);">23</span>
<div style="position:absolute;left:442.2px;top:1196.8px;width:427.9px;height:12.7px;background:#e1e8f2"></div>
<div style="position:absolute;left:442.2px;top:1209.5px;width:427.9px;height:15.5px;background:#cbd8ea"></div>
<div style="position:absolute;left:442.2px;top:1196.8px;width:2px;height:28.2px;background:#9db4dc"></div>
<div style="position:absolute;left:868.2px;top:1196.8px;width:1.8px;height:28.2px;background:#9db4dc"></div>
<div style="position:absolute;left:442.2px;top:1225.0px;width:427.9px;height:209.1px;background:#fff"></div>
<div style="position:absolute;left:442.2px;top:1225.0px;width:2.2px;height:209.1px;background:#abbee0"></div>
<div style="position:absolute;left:868.0px;top:1225.0px;width:2px;height:209.1px;background:#abbee0"></div>
<span style="left:451.44px;top:1201.51px;font:normal normal 20px/20px 'Liberation Sans';color:#222;transform:scaleX(0.9200);">24</span>
<div style="position:absolute;left:870.0px;top:1196.8px;width:427.9px;height:12.7px;background:#e1e8f2"></div>
<div style="position:absolute;left:870.0px;top:1209.5px;width:427.9px;height:15.5px;background:#cbd8ea"></div>
<div style="position:absolute;left:870.0px;top:1196.8px;width:2px;height:28.2px;background:#9db4dc"></div>
<div style="position:absolute;left:1296.1px;top:1196.8px;width:1.8px;height:28.2px;background:#9db4dc"></div>
<div style="position:absolute;left:870.0px;top:1225.0px;width:427.9px;height:209.1px;background:#fff"></div>
<div style="position:absolute;left:870.0px;top:1225.0px;width:2.2px;height:209.1px;background:#abbee0"></div>
<div style="position:absolute;left:1295.9px;top:1225.0px;width:2px;height:209.1px;background:#abbee0"></div>
<span style="left:879.30px;top:1201.51px;font:normal normal 20px/20px 'Liberation Sans';color:#222;transform:scaleX(0.9200);">25</span>
<div style="position:absolute;left:1297.9px;top:1196.8px;width:427.9px;height:12.7px;background:#e1e8f2"></div>
<div style="position:absolute;left:1297.9px;top:1209.5px;width:427.9px;height:15.5px;background:#cbd8ea"></div>
<div style="position:absolute;left:1297.9px;top:1196.8px;width:2px;height:28.2px;background:#9db4dc"></div>
<div style="position:absolute;left:1723.9px;top:1196.8px;width:1.8px;height:28.2px;background:#9db4dc"></div>
<div style="position:absolute;left:1297.9px;top:1225.0px;width:427.9px;height:209.1px;background:#fff"></div>
<div style="position:absolute;left:1297.9px;top:1225.0px;width:2.2px;height:209.1px;background:#abbee0"></div>
<div style="position:absolute;left:1723.7px;top:1225.0px;width:2px;height:209.1px;background:#abbee0"></div>
<span style="left:1307.16px;top:1201.51px;font:normal normal 20px/20px 'Liberation Sans';color:#222;transform:scaleX(0.9200);">26</span>
<div style="position:absolute;left:1725.7px;top:1196.8px;width:427.9px;height:12.7px;background:#e1e8f2"></div>
<div style="position:absolute;left:1725.7px;top:1209.5px;width:427.9px;height:15.5px;background:#cbd8ea"></div>
<div style="position:absolute;left:1725.7px;top:1196.8px;width:2px;height:28.2px;background:#9db4dc"></div>
<div style="position:absolute;left:2151.8px;top:1196.8px;width:1.8px;height:28.2px;background:#9db4dc"></div>
<div style="position:absolute;left:1725.7px;top:1225.0px;width:427.9px;height:209.1px;background:#fff"></div>
<div style="position:absolute;left:1725.7px;top:1225.0px;width:2.2px;height:209.1px;background:#abbee0"></div>
<div style="position:absolute;left:2151.6px;top:1225.0px;width:2px;height:209.1px;background:#abbee0"></div>
<span style="left:1735.02px;top:1201.51px;font:normal normal 20px/20px 'Liberation Sans';color:#222;transform:scaleX(0.9200);">27</span>
<div style="position:absolute;left:2153.6px;top:1196.8px;width:427.9px;height:12.7px;background:#e1e8f2"></div>
<div style="position:absolute;left:2153.6px;top:1209.5px;width:427.9px;height:15.5px;background:#cbd8ea"></div>
<div style="position:absolute;left:2153.6px;top:1196.8px;width:2px;height:28.2px;background:#9db4dc"></div>
<div style="position:absolute;left:2579.7px;top:1196.8px;width:1.8px;height:28.2px;background:#9db4dc"></div>
<div style="position:absolute;left:2153.6px;top:1225.0px;width:427.9px;height:209.1px;background:#fff"></div>
<div style="position:absolute;left:2153.6px;top:1225.0px;width:2.2px;height:209.1px;background:#abbee0"></div>
<div style="position:absolute;left:2579.5px;top:1225.0px;width:2px;height:209.1px;background:#abbee0"></div>
<span style="left:2162.88px;top:1201.51px;font:normal normal 20px/20px 'Liberation Sans';color:#222;transform:scaleX(0.9200);">28</span>
<div style="position:absolute;left:2581.5px;top:1196.8px;width:428.0px;height:12.7px;background:#e1e8f2"></div>
<div style="position:absolute;left:2581.5px;top:1209.5px;width:428.0px;height:15.5px;background:#cbd8ea"></div>
<div style="position:absolute;left:2581.5px;top:1196.8px;width:2px;height:28.2px;background:#9db4dc"></div>
<div style="position:absolute;left:3007.7px;top:1196.8px;width:1.8px;height:28.2px;background:#9db4dc"></div>
<div style="position:absolute;left:2581.5px;top:1225.0px;width:428.0px;height:209.1px;background:#99b894"></div>
<span style="left:2592.06px;top:1201.51px;font:normal normal 20px/20px 'Liberation Sans';color:#222;">1</span>
<div style="position:absolute;left:14.3px;top:1434.1px;width:2995px;height:2px;background:#a5badd"></div>
<div style="position:absolute;left:14.3px;top:1436.1px;width:427.9px;height:12.7px;background:#e1e8f2"></div>
<div style="position:absolute;left:14.3px;top:1448.8px;width:427.9px;height:15.5px;background:#cbd8ea"></div>
<div style="position:absolute;left:14.3px;top:1436.1px;width:2px;height:28.2px;background:#9db4dc"></div>
<div style="position:absolute;left:440.4px;top:1436.1px;width:1.8px;height:28.2px;background:#9db4dc"></div>
<div style="position:absolute;left:14.3px;top:1464.3px;width:427.9px;height:209.5px;background:#99b894"></div>
<span style="left:23.50px;top:1440.77px;font:normal normal 20px/20px 'Liberation Sans';color:#222;">2</span>
<div style="position:absolute;left:442.2px;top:1436.1px;width:427.9px;height:12.7px;background:#e1e8f2"></div>
<div style="position:absolute;left:442.2px;top:1448.8px;width:427.9px;height:15.5px;background:#cbd8ea"></div>
<div style="position:absolute;left:442.2px;top:1436.1px;width:2px;height:28.2px;background:#9db4dc"></div>
<div style="position:absolute;left:868.2px;top:1436.1px;width:1.8px;height:28.2px;background:#9db4dc"></div>
<div style="position:absolute;left:442.2px;top:1464.3px;width:427.9px;height:209.5px;background:#fff"></div>
<div style="position:absolute;left:442.2px;top:1464.3px;width:2.2px;height:209.5px;background:#abbee0"></div>
<div style="position:absolute;left:868.0px;top:1464.3px;width:2px;height:209.5px;background:#abbee0"></div>
<div style="position:absolute;left:442.2px;top:1671.6px;width:427.9px;height:2.2px;background:#adc0e2"></div>
<span style="left:452.36px;top:1440.77px;font:normal normal 20px/20px 'Liberation Sans';color:#222;">3</span>
<div style="position:absolute;left:870.0px;top:1436.1px;width:427.9px;height:12.7px;background:#e1e8f2"></div>
<div style="position:absolute;left:870.0px;top:1448.8px;width:427.9px;height:15.5px;background:#cbd8ea"></div>
<div style="position:absolute;left:870.0px;top:1436.1px;width:2px;height:28.2px;background:#9db4dc"></div>
<div style="position:absolute;left:1296.1px;top:1436.1px;width:1.8px;height:28.2px;background:#9db4dc"></div>
<div style="position:absolute;left:870.0px;top:1464.3px;width:427.9px;height:209.5px;background:#fff"></div>
<div style="position:absolute;left:870.0px;top:1464.3px;width:2.2px;height:209.5px;background:#abbee0"></div>
<div style="position:absolute;left:1295.9px;top:1464.3px;width:2px;height:209.5px;background:#abbee0"></div>
<div style="position:absolute;left:870.0px;top:1671.6px;width:427.9px;height:2.2px;background:#adc0e2"></div>
<span style="left:880.22px;top:1440.77px;font:normal normal 20px/20px 'Liberation Sans';color:#222;">4</span>
<div style="position:absolute;left:1297.9px;top:1436.1px;width:427.9px;height:12.7px;background:#e1e8f2"></div>
<div style="position:absolute;left:1297.9px;top:1448.8px;width:427.9px;height:15.5px;background:#cbd8ea"></div>
<div style="position:absolute;left:1297.9px;top:1436.1px;width:2px;height:28.2px;background:#9db4dc"></div>
<div style="position:absolute;left:1723.9px;top:1436.1px;width:1.8px;height:28.2px;background:#9db4dc"></div>
<div style="position:absolute;left:1297.9px;top:1464.3px;width:427.9px;height:209.5px;background:#fff"></div>
<div style="position:absolute;left:1297.9px;top:1464.3px;width:2.2px;height:209.5px;background:#abbee0"></div>
<div style="position:absolute;left:1723.7px;top:1464.3px;width:2px;height:209.5px;background:#abbee0"></div>
<div style="position:absolute;left:1297.9px;top:1671.6px;width:427.9px;height:2.2px;background:#adc0e2"></div>
<span style="left:1308.08px;top:1440.77px;font:normal normal 20px/20px 'Liberation Sans';color:#222;">5</span>
<div style="position:absolute;left:1725.7px;top:1436.1px;width:427.9px;height:12.7px;background:#e1e8f2"></div>
<div style="position:absolute;left:1725.7px;top:1448.8px;width:427.9px;height:15.5px;background:#cbd8ea"></div>
<div style="position:absolute;left:1725.7px;top:1436.1px;width:2px;height:28.2px;background:#9db4dc"></div>
<div style="position:absolute;left:2151.8px;top:1436.1px;width:1.8px;height:28.2px;background:#9db4dc"></div>
<div style="position:absolute;left:1725.7px;top:1464.3px;width:427.9px;height:209.5px;background:#fff"></div>
<div style="position:absolute;left:1725.7px;top:1464.3px;width:2.2px;height:209.5px;background:#abbee0"></div>
<div style="position:absolute;left:2151.6px;top:1464.3px;width:2px;height:209.5px;background:#abbee0"></div>
<div style="position:absolute;left:1725.7px;top:1671.6px;width:427.9px;height:2.2px;background:#adc0e2"></div>
<span style="left:1734.94px;top:1440.77px;font:normal normal 20px/20px 'Liberation Sans';color:#222;">6</span>
<div style="position:absolute;left:2153.6px;top:1436.1px;width:427.9px;height:12.7px;background:#e1e8f2"></div>
<div style="position:absolute;left:2153.6px;top:1448.8px;width:427.9px;height:15.5px;background:#cbd8ea"></div>
<div style="position:absolute;left:2153.6px;top:1436.1px;width:2px;height:28.2px;background:#9db4dc"></div>
<div style="position:absolute;left:2579.7px;top:1436.1px;width:1.8px;height:28.2px;background:#9db4dc"></div>
<div style="position:absolute;left:2153.6px;top:1464.3px;width:427.9px;height:209.5px;background:#fff"></div>
<div style="position:absolute;left:2153.6px;top:1464.3px;width:2.2px;height:209.5px;background:#abbee0"></div>
<div style="position:absolute;left:2579.5px;top:1464.3px;width:2px;height:209.5px;background:#abbee0"></div>
<div style="position:absolute;left:2153.6px;top:1671.6px;width:427.9px;height:2.2px;background:#adc0e2"></div>
<span style="left:2162.80px;top:1440.77px;font:normal normal 20px/20px 'Liberation Sans';color:#222;">7</span>
<div style="position:absolute;left:2581.5px;top:1436.1px;width:428.0px;height:12.7px;background:#e1e8f2"></div>
<div style="position:absolute;left:2581.5px;top:1448.8px;width:428.0px;height:15.5px;background:#cbd8ea"></div>
<div style="position:absolute;left:2581.5px;top:1436.1px;width:2px;height:28.2px;background:#9db4dc"></div>
<div style="position:absolute;left:3007.7px;top:1436.1px;width:1.8px;height:28.2px;background:#9db4dc"></div>
<div style="position:absolute;left:2581.5px;top:1464.3px;width:428.0px;height:209.5px;background:#99b894"></div>
<span style="left:2591.66px;top:1440.77px;font:normal normal 20px/20px 'Liberation Sans';color:#222;">8</span>
<div class="c" style="left:1727.94px;top:268.00px;width:423.66px;height:209.06px"><span style="left:0.45px;top:8.48px;font:normal bold 24px/24px 'Liberation Sans';color:#222;transform:scaleX(0.9532);">Kill: 0</span></div>
<div class="c" style="left:1727.94px;top:268.00px;width:423.66px;height:209.06px"><span style="left:0.30px;top:39.26px;font:normal normal 18px/18px 'Liberation Sans';color:#303030;transform:scaleX(1.0834);">07:30 AM - 04:00 PM</span></div>
<div class="c" style="left:1727.94px;top:268.00px;width:423.66px;height:209.06px"><span style="left:0.30px;top:61.36px;font:normal normal 18px/18px 'Liberation Sans';color:#303030;transform:scaleX(1.0834);">04:30 PM - 01:00 AM</span></div>
<div class="c" style="left:1727.94px;top:268.00px;width:300.00px;height:109.00px"><span style="left:1.40px;top:94.68px;font:normal bold 24px/24px 'Liberation Sans';color:#222;transform:scaleX(0.9313);">Cut: 0</span></div>
<div class="c" style="left:1727.94px;top:268.00px;width:423.66px;height:209.06px"><span style="left:0.30px;top:115.76px;font:normal normal 18px/18px 'Liberation Sans';color:#303030;transform:scaleX(1.0834);">06:00 AM - 02:30 PM</span></div>
<div class="c" style="left:1727.94px;top:268.00px;width:423.66px;height:209.06px"><span style="left:0.30px;top:137.56px;font:normal normal 18px/18px 'Liberation Sans';color:#303030;transform:scaleX(1.0760);">03:15 PM - 11:45 PM</span></div>
<div class="c" style="left:1727.94px;top:268.00px;width:300.00px;height:184.50px"><span style="left:0.42px;top:169.98px;font:normal bold 24px/24px 'Liberation Sans';color:#222;transform:scaleX(0.9815);">Rework:</span></div>
<div class="c" style="left:1727.94px;top:268.00px;width:423.66px;height:209.06px"><span style="left:6.30px;top:192.56px;font:normal normal 18px/18px 'Liberation Sans';color:#222;">-</span></div>
<div class="c" style="left:2155.80px;top:268.00px;width:423.66px;height:209.06px"><span style="left:0.45px;top:8.48px;font:normal bold 24px/24px 'Liberation Sans';color:#222;transform:scaleX(0.9532);">Kill: 0</span></div>
<div class="c" style="left:2155.80px;top:268.00px;width:423.66px;height:209.06px"><span style="left:0.30px;top:39.26px;font:normal normal 18px/18px 'Liberation Sans';color:#303030;transform:scaleX(1.0834);">07:30 AM - 04:00 PM</span></div>
<div class="c" style="left:2155.80px;top:268.00px;width:423.66px;height:209.06px"><span style="left:0.30px;top:61.36px;font:normal normal 18px/18px 'Liberation Sans';color:#303030;transform:scaleX(1.0834);">04:30 PM - 01:00 AM</span></div>
<div class="c" style="left:2155.80px;top:268.00px;width:300.00px;height:109.00px"><span style="left:1.40px;top:94.68px;font:normal bold 24px/24px 'Liberation Sans';color:#222;transform:scaleX(0.9313);">Cut: 0</span></div>
<div class="c" style="left:2155.80px;top:268.00px;width:423.66px;height:209.06px"><span style="left:0.30px;top:115.76px;font:normal normal 18px/18px 'Liberation Sans';color:#303030;transform:scaleX(1.0834);">06:00 AM - 02:30 PM</span></div>
<div class="c" style="left:2155.80px;top:268.00px;width:423.66px;height:209.06px"><span style="left:0.30px;top:137.56px;font:normal normal 18px/18px 'Liberation Sans';color:#303030;transform:scaleX(1.0760);">03:15 PM - 11:45 PM</span></div>
<div class="c" style="left:2155.80px;top:268.00px;width:300.00px;height:184.50px"><span style="left:0.42px;top:169.98px;font:normal bold 24px/24px 'Liberation Sans';color:#222;transform:scaleX(0.9815);">Rework:</span></div>
<div class="c" style="left:2155.80px;top:268.00px;width:423.66px;height:209.06px"><span style="left:6.30px;top:192.56px;font:normal normal 18px/18px 'Liberation Sans';color:#222;">-</span></div>
<div class="c" style="left:444.36px;top:507.26px;width:423.66px;height:209.06px"><span style="left:0.45px;top:8.48px;font:normal bold 24px/24px 'Liberation Sans';color:#222;transform:scaleX(0.9532);">Kill: 0</span></div>
<div class="c" style="left:444.36px;top:507.26px;width:423.66px;height:209.06px"><span style="left:0.30px;top:39.26px;font:normal normal 18px/18px 'Liberation Sans';color:#303030;transform:scaleX(1.0834);">07:30 AM - 04:00 PM</span></div>
<div class="c" style="left:444.36px;top:507.26px;width:423.66px;height:209.06px"><span style="left:0.30px;top:61.36px;font:normal normal 18px/18px 'Liberation Sans';color:#303030;transform:scaleX(1.0834);">04:30 PM - 01:00 AM</span></div>
<div class="c" style="left:444.36px;top:507.26px;width:300.00px;height:109.00px"><span style="left:1.40px;top:94.68px;font:normal bold 24px/24px 'Liberation Sans';color:#222;transform:scaleX(0.9313);">Cut: 0</span></div>
<div class="c" style="left:444.36px;top:507.26px;width:423.66px;height:209.06px"><span style="left:0.30px;top:115.76px;font:normal normal 18px/18px 'Liberation Sans';color:#303030;transform:scaleX(1.0834);">06:00 AM - 02:30 PM</span></div>
<div class="c" style="left:444.36px;top:507.26px;width:423.66px;height:209.06px"><span style="left:0.30px;top:137.56px;font:normal normal 18px/18px 'Liberation Sans';color:#303030;transform:scaleX(1.0760);">03:15 PM - 11:45 PM</span></div>
<div class="c" style="left:444.36px;top:507.26px;width:300.00px;height:184.50px"><span style="left:0.42px;top:169.98px;font:normal bold 24px/24px 'Liberation Sans';color:#222;transform:scaleX(0.9815);">Rework:</span></div>
<div class="c" style="left:444.36px;top:507.26px;width:423.66px;height:209.06px"><span style="left:6.30px;top:192.56px;font:normal normal 18px/18px 'Liberation Sans';color:#222;">-</span></div>
<div class="c" style="left:873.82px;top:507.26px;width:422.06px;height:205.26px"><span style="left:0.45px;top:8.48px;font:normal bold 24px/24px 'Liberation Sans';color:#222;transform:scaleX(0.9532);">Kill: 0</span></div>
<div class="c" style="left:873.82px;top:507.26px;width:422.06px;height:205.26px"><span style="left:0.30px;top:39.26px;font:normal normal 18px/18px 'Liberation Sans';color:#303030;transform:scaleX(1.0834);">07:30 AM - 04:00 PM</span></div>
<div class="c" style="left:873.82px;top:507.26px;width:422.06px;height:205.26px"><span style="left:0.30px;top:61.36px;font:normal normal 18px/18px 'Liberation Sans';color:#303030;transform:scaleX(1.0834);">04:30 PM - 01:00 AM</span></div>
<div class="c" style="left:873.82px;top:507.26px;width:300.00px;height:109.00px"><span style="left:1.40px;top:94.68px;font:normal bold 24px/24px 'Liberation Sans';color:#222;transform:scaleX(0.9313);">Cut: 0</span></div>
<div class="c" style="left:873.82px;top:507.26px;width:422.06px;height:205.26px"><span style="left:0.30px;top:115.76px;font:normal normal 18px/18px 'Liberation Sans';color:#303030;transform:scaleX(1.0834);">06:00 AM - 02:30 PM</span></div>
<div class="c" style="left:873.82px;top:507.26px;width:422.06px;height:205.26px"><span style="left:0.30px;top:137.56px;font:normal normal 18px/18px 'Liberation Sans';color:#303030;transform:scaleX(1.0760);">03:15 PM - 11:45 PM</span></div>
<div class="c" style="left:873.82px;top:507.26px;width:300.00px;height:184.50px"><span style="left:0.42px;top:169.98px;font:normal bold 24px/24px 'Liberation Sans';color:#222;transform:scaleX(0.9815);">Rework:</span></div>
<div class="c" style="left:873.82px;top:507.26px;width:422.06px;height:205.26px"><span style="left:6.30px;top:192.56px;font:normal normal 18px/18px 'Liberation Sans';color:#222;">-</span></div>
<div class="c" style="left:1300.08px;top:507.26px;width:423.66px;height:209.06px"><span style="left:0.45px;top:8.48px;font:normal bold 24px/24px 'Liberation Sans';color:#222;transform:scaleX(0.9532);">Kill: 0</span></div>
<div class="c" style="left:1300.08px;top:507.26px;width:423.66px;height:209.06px"><span style="left:0.30px;top:39.26px;font:normal normal 18px/18px 'Liberation Sans';color:#303030;transform:scaleX(1.0834);">07:30 AM - 04:00 PM</span></div>
<div class="c" style="left:1300.08px;top:507.26px;width:423.66px;height:209.06px"><span style="left:0.30px;top:61.36px;font:normal normal 18px/18px 'Liberation Sans';color:#303030;transform:scaleX(1.0834);">04:30 PM - 01:00 AM</span></div>
<div class="c" style="left:1300.08px;top:507.26px;width:300.00px;height:109.00px"><span style="left:1.40px;top:94.68px;font:normal bold 24px/24px 'Liberation Sans';color:#222;transform:scaleX(0.9313);">Cut: 0</span></div>
<div class="c" style="left:1300.08px;top:507.26px;width:423.66px;height:209.06px"><span style="left:0.30px;top:115.76px;font:normal normal 18px/18px 'Liberation Sans';color:#303030;transform:scaleX(1.0834);">06:00 AM - 02:30 PM</span></div>
<div class="c" style="left:1300.08px;top:507.26px;width:423.66px;height:209.06px"><span style="left:0.30px;top:137.56px;font:normal normal 18px/18px 'Liberation Sans';color:#303030;transform:scaleX(1.0760);">03:15 PM - 11:45 PM</span></div>
<div class="c" style="left:1300.08px;top:507.26px;width:300.00px;height:184.50px"><span style="left:0.42px;top:169.98px;font:normal bold 24px/24px 'Liberation Sans';color:#222;transform:scaleX(0.9815);">Rework:</span></div>
<div class="c" style="left:1300.08px;top:507.26px;width:423.66px;height:209.06px"><span style="left:6.30px;top:192.56px;font:normal normal 18px/18px 'Liberation Sans';color:#222;">-</span></div>
<div class="c" style="left:1727.94px;top:507.26px;width:423.66px;height:209.06px"><span style="left:0.45px;top:8.48px;font:normal bold 24px/24px 'Liberation Sans';color:#222;transform:scaleX(0.9532);">Kill: 0</span></div>
<div class="c" style="left:1727.94px;top:507.26px;width:423.66px;height:209.06px"><span style="left:0.30px;top:39.26px;font:normal normal 18px/18px 'Liberation Sans';color:#303030;transform:scaleX(1.0834);">07:30 AM - 04:00 PM</span></div>
<div class="c" style="left:1727.94px;top:507.26px;width:423.66px;height:209.06px"><span style="left:0.30px;top:61.36px;font:normal normal 18px/18px 'Liberation Sans';color:#303030;transform:scaleX(1.0834);">04:30 PM - 01:00 AM</span></div>
<div class="c" style="left:1727.94px;top:507.26px;width:300.00px;height:109.00px"><span style="left:1.40px;top:94.68px;font:normal bold 24px/24px 'Liberation Sans';color:#222;transform:scaleX(0.9313);">Cut: 0</span></div>
<div class="c" style="left:1727.94px;top:507.26px;width:423.66px;height:209.06px"><span style="left:0.30px;top:115.76px;font:normal normal 18px/18px 'Liberation Sans';color:#303030;transform:scaleX(1.0834);">06:00 AM - 02:30 PM</span></div>
<div class="c" style="left:1727.94px;top:507.26px;width:423.66px;height:209.06px"><span style="left:0.30px;top:137.56px;font:normal normal 18px/18px 'Liberation Sans';color:#303030;transform:scaleX(1.0760);">03:15 PM - 11:45 PM</span></div>
<div class="c" style="left:1727.94px;top:507.26px;width:300.00px;height:184.50px"><span style="left:0.42px;top:169.98px;font:normal bold 24px/24px 'Liberation Sans';color:#222;transform:scaleX(0.9815);">Rework:</span></div>
<div class="c" style="left:1727.94px;top:507.26px;width:423.66px;height:209.06px"><span style="left:6.30px;top:192.56px;font:normal normal 18px/18px 'Liberation Sans';color:#222;">-</span></div>
<div class="c" style="left:2155.80px;top:507.26px;width:423.66px;height:209.06px"><span style="left:0.45px;top:8.48px;font:normal bold 24px/24px 'Liberation Sans';color:#222;transform:scaleX(0.9532);">Kill: 0</span></div>
<div class="c" style="left:2155.80px;top:507.26px;width:423.66px;height:209.06px"><span style="left:0.30px;top:39.26px;font:normal normal 18px/18px 'Liberation Sans';color:#303030;transform:scaleX(1.0834);">07:30 AM - 04:00 PM</span></div>
<div class="c" style="left:2155.80px;top:507.26px;width:423.66px;height:209.06px"><span style="left:0.30px;top:61.36px;font:normal normal 18px/18px 'Liberation Sans';color:#303030;transform:scaleX(1.0834);">04:30 PM - 01:00 AM</span></div>
<div class="c" style="left:2155.80px;top:507.26px;width:300.00px;height:109.00px"><span style="left:1.40px;top:94.68px;font:normal bold 24px/24px 'Liberation Sans';color:#222;transform:scaleX(0.9313);">Cut: 0</span></div>
<div class="c" style="left:2155.80px;top:507.26px;width:423.66px;height:209.06px"><span style="left:0.30px;top:115.76px;font:normal normal 18px/18px 'Liberation Sans';color:#303030;transform:scaleX(1.0834);">06:00 AM - 02:30 PM</span></div>
<div class="c" style="left:2155.80px;top:507.26px;width:423.66px;height:209.06px"><span style="left:0.30px;top:137.56px;font:normal normal 18px/18px 'Liberation Sans';color:#303030;transform:scaleX(1.0760);">03:15 PM - 11:45 PM</span></div>
<div class="c" style="left:2155.80px;top:507.26px;width:300.00px;height:184.50px"><span style="left:0.42px;top:169.98px;font:normal bold 24px/24px 'Liberation Sans';color:#222;transform:scaleX(0.9815);">Rework:</span></div>
<div class="c" style="left:2155.80px;top:507.26px;width:423.66px;height:209.06px"><span style="left:6.30px;top:192.56px;font:normal normal 18px/18px 'Liberation Sans';color:#222;">-</span></div>
<div class="c" style="left:444.36px;top:746.52px;width:423.66px;height:209.06px"><span style="left:0.45px;top:8.48px;font:normal bold 24px/24px 'Liberation Sans';color:#222;transform:scaleX(0.9532);">Kill: 0</span></div>
<div class="c" style="left:444.36px;top:746.52px;width:423.66px;height:209.06px"><span style="left:0.30px;top:39.26px;font:normal normal 18px/18px 'Liberation Sans';color:#303030;transform:scaleX(1.0834);">07:30 AM - 04:00 PM</span></div>
<div class="c" style="left:444.36px;top:746.52px;width:423.66px;height:209.06px"><span style="left:0.30px;top:61.36px;font:normal normal 18px/18px 'Liberation Sans';color:#303030;transform:scaleX(1.0834);">04:30 PM - 01:00 AM</span></div>
<div class="c" style="left:444.36px;top:746.52px;width:300.00px;height:109.00px"><span style="left:1.40px;top:94.68px;font:normal bold 24px/24px 'Liberation Sans';color:#222;transform:scaleX(0.9313);">Cut: 0</span></div>
<div class="c" style="left:444.36px;top:746.52px;width:423.66px;height:209.06px"><span style="left:0.30px;top:115.76px;font:normal normal 18px/18px 'Liberation Sans';color:#303030;transform:scaleX(1.0834);">06:00 AM - 02:30 PM</span></div>
<div class="c" style="left:444.36px;top:746.52px;width:423.66px;height:209.06px"><span style="left:0.30px;top:137.56px;font:normal normal 18px/18px 'Liberation Sans';color:#303030;transform:scaleX(1.0760);">03:15 PM - 11:45 PM</span></div>
<div class="c" style="left:444.36px;top:746.52px;width:300.00px;height:184.50px"><span style="left:0.42px;top:169.98px;font:normal bold 24px/24px 'Liberation Sans';color:#222;transform:scaleX(0.9815);">Rework:</span></div>
<div class="c" style="left:444.36px;top:746.52px;width:423.66px;height:209.06px"><span style="left:6.30px;top:192.56px;font:normal normal 18px/18px 'Liberation Sans';color:#222;">-</span></div>
<div class="c" style="left:872.22px;top:746.52px;width:423.66px;height:209.06px"><span style="left:0.45px;top:8.48px;font:normal bold 24px/24px 'Liberation Sans';color:#222;transform:scaleX(0.9532);">Kill: 0</span></div>
<div class="c" style="left:872.22px;top:746.52px;width:423.66px;height:209.06px"><span style="left:0.30px;top:39.26px;font:normal normal 18px/18px 'Liberation Sans';color:#303030;transform:scaleX(1.0834);">07:30 AM - 04:00 PM</span></div>
<div class="c" style="left:872.22px;top:746.52px;width:423.66px;height:209.06px"><span style="left:0.30px;top:61.36px;font:normal normal 18px/18px 'Liberation Sans';color:#303030;transform:scaleX(1.0834);">04:30 PM - 01:00 AM</span></div>
<div class="c" style="left:872.22px;top:746.52px;width:300.00px;height:109.00px"><span style="left:1.40px;top:94.68px;font:normal bold 24px/24px 'Liberation Sans';color:#222;transform:scaleX(0.9313);">Cut: 0</span></div>
<div class="c" style="left:872.22px;top:746.52px;width:423.66px;height:209.06px"><span style="left:0.30px;top:115.76px;font:normal normal 18px/18px 'Liberation Sans';color:#303030;transform:scaleX(1.0834);">06:00 AM - 02:30 PM</span></div>
<div class="c" style="left:872.22px;top:746.52px;width:423.66px;height:209.06px"><span style="left:0.30px;top:137.56px;font:normal normal 18px/18px 'Liberation Sans';color:#303030;transform:scaleX(1.0760);">03:15 PM - 11:45 PM</span></div>
<div class="c" style="left:872.22px;top:746.52px;width:300.00px;height:184.50px"><span style="left:0.42px;top:169.98px;font:normal bold 24px/24px 'Liberation Sans';color:#222;transform:scaleX(0.9815);">Rework:</span></div>
<div class="c" style="left:872.22px;top:746.52px;width:423.66px;height:209.06px"><span style="left:6.30px;top:192.56px;font:normal normal 18px/18px 'Liberation Sans';color:#222;">-</span></div>
<div class="c" style="left:1300.08px;top:746.52px;width:423.66px;height:209.06px"><span style="left:0.45px;top:8.48px;font:normal bold 24px/24px 'Liberation Sans';color:#222;transform:scaleX(0.9532);">Kill: 0</span></div>
<div class="c" style="left:1300.08px;top:746.52px;width:423.66px;height:209.06px"><span style="left:0.30px;top:39.26px;font:normal normal 18px/18px 'Liberation Sans';color:#303030;transform:scaleX(1.0834);">07:30 AM - 04:00 PM</span></div>
<div class="c" style="left:1300.08px;top:746.52px;width:423.66px;height:209.06px"><span style="left:0.30px;top:61.36px;font:normal normal 18px/18px 'Liberation Sans';color:#303030;transform:scaleX(1.0834);">04:30 PM - 01:00 AM</span></div>
<div class="c" style="left:1300.08px;top:746.52px;width:300.00px;height:109.00px"><span style="left:1.40px;top:94.68px;font:normal bold 24px/24px 'Liberation Sans';color:#222;transform:scaleX(0.9313);">Cut: 0</span></div>
<div class="c" style="left:1300.08px;top:746.52px;width:423.66px;height:209.06px"><span style="left:0.30px;top:115.76px;font:normal normal 18px/18px 'Liberation Sans';color:#303030;transform:scaleX(1.0834);">06:00 AM - 02:30 PM</span></div>
<div class="c" style="left:1300.08px;top:746.52px;width:423.66px;height:209.06px"><span style="left:0.30px;top:137.56px;font:normal normal 18px/18px 'Liberation Sans';color:#303030;transform:scaleX(1.0760);">03:15 PM - 11:45 PM</span></div>
<div class="c" style="left:1300.08px;top:746.52px;width:300.00px;height:184.50px"><span style="left:0.42px;top:169.98px;font:normal bold 24px/24px 'Liberation Sans';color:#222;transform:scaleX(0.9815);">Rework:</span></div>
<div class="c" style="left:1300.08px;top:746.52px;width:423.66px;height:209.06px"><span style="left:6.30px;top:192.56px;font:normal normal 18px/18px 'Liberation Sans';color:#222;">-</span></div>
<div class="c" style="left:1727.94px;top:746.52px;width:423.66px;height:209.06px"><span style="left:0.45px;top:8.48px;font:normal bold 24px/24px 'Liberation Sans';color:#222;transform:scaleX(0.9532);">Kill: 0</span></div>
<div class="c" style="left:1727.94px;top:746.52px;width:423.66px;height:209.06px"><span style="left:0.30px;top:39.26px;font:normal normal 18px/18px 'Liberation Sans';color:#303030;transform:scaleX(1.0834);">07:30 AM - 04:00 PM</span></div>
<div class="c" style="left:1727.94px;top:746.52px;width:423.66px;height:209.06px"><span style="left:0.30px;top:61.36px;font:normal normal 18px/18px 'Liberation Sans';color:#303030;transform:scaleX(1.0834);">04:30 PM - 01:00 AM</span></div>
<div class="c" style="left:1727.94px;top:746.52px;width:300.00px;height:109.00px"><span style="left:1.40px;top:94.68px;font:normal bold 24px/24px 'Liberation Sans';color:#222;transform:scaleX(0.9313);">Cut: 0</span></div>
<div class="c" style="left:1727.94px;top:746.52px;width:423.66px;height:209.06px"><span style="left:0.30px;top:115.76px;font:normal normal 18px/18px 'Liberation Sans';color:#303030;transform:scaleX(1.0834);">06:00 AM - 02:30 PM</span></div>
<div class="c" style="left:1727.94px;top:746.52px;width:423.66px;height:209.06px"><span style="left:0.30px;top:137.56px;font:normal normal 18px/18px 'Liberation Sans';color:#303030;transform:scaleX(1.0760);">03:15 PM - 11:45 PM</span></div>
<div class="c" style="left:1727.94px;top:746.52px;width:300.00px;height:184.50px"><span style="left:0.42px;top:169.98px;font:normal bold 24px/24px 'Liberation Sans';color:#222;transform:scaleX(0.9815);">Rework:</span></div>
<div class="c" style="left:1727.94px;top:746.52px;width:423.66px;height:209.06px"><span style="left:6.30px;top:192.56px;font:normal normal 18px/18px 'Liberation Sans';color:#222;">-</span></div>
<div class="c" style="left:2155.80px;top:746.52px;width:423.66px;height:209.06px"><span style="left:0.45px;top:8.48px;font:normal bold 24px/24px 'Liberation Sans';color:#222;transform:scaleX(0.9532);">Kill: 0</span></div>
<div class="c" style="left:2155.80px;top:746.52px;width:423.66px;height:209.06px"><span style="left:5.80px;top:40.66px;font:normal normal 18px/18px 'Liberation Sans';color:#222;transform:scaleX(1.1667);">-</span></div>
<div class="c" style="left:2155.80px;top:746.52px;width:423.66px;height:209.06px"><span style="left:5.80px;top:62.76px;font:normal normal 18px/18px 'Liberation Sans';color:#222;transform:scaleX(1.1667);">-</span></div>
<div class="c" style="left:2155.80px;top:746.52px;width:300.00px;height:109.00px"><span style="left:1.40px;top:94.68px;font:normal bold 24px/24px 'Liberation Sans';color:#222;transform:scaleX(0.9313);">Cut: 0</span></div>
<div class="c" style="left:2155.80px;top:746.52px;width:423.66px;height:209.06px"><span style="left:0.30px;top:115.76px;font:normal normal 18px/18px 'Liberation Sans';color:#303030;transform:scaleX(1.0834);">06:00 AM - 02:30 PM</span></div>
<div class="c" style="left:2155.80px;top:746.52px;width:423.66px;height:209.06px"><span style="left:0.30px;top:137.56px;font:normal normal 18px/18px 'Liberation Sans';color:#303030;transform:scaleX(1.0760);">03:15 PM - 11:45 PM</span></div>
<div class="c" style="left:2155.80px;top:746.52px;width:300.00px;height:184.50px"><span style="left:0.42px;top:169.98px;font:normal bold 24px/24px 'Liberation Sans';color:#222;transform:scaleX(0.9815);">Rework:</span></div>
<div class="c" style="left:2155.80px;top:746.52px;width:423.66px;height:209.06px"><span style="left:6.30px;top:192.56px;font:normal normal 18px/18px 'Liberation Sans';color:#222;">-</span></div>
<div class="c" style="left:444.36px;top:985.78px;width:423.66px;height:209.06px"><span style="left:0.45px;top:8.48px;font:normal bold 24px/24px 'Liberation Sans';color:#222;transform:scaleX(0.9532);">Kill: 0</span></div>
<div class="c" style="left:444.36px;top:985.78px;width:423.66px;height:209.06px"><span style="left:0.30px;top:39.26px;font:normal normal 18px/18px 'Liberation Sans';color:#303030;transform:scaleX(1.0834);">07:30 AM - 04:00 PM</span></div>
<div class="c" style="left:444.36px;top:985.78px;width:423.66px;height:209.06px"><span style="left:0.30px;top:61.36px;font:normal normal 18px/18px 'Liberation Sans';color:#303030;transform:scaleX(1.0834);">04:30 PM - 01:00 AM</span></div>
<div class="c" style="left:444.36px;top:985.78px;width:300.00px;height:109.00px"><span style="left:1.40px;top:94.68px;font:normal bold 24px/24px 'Liberation Sans';color:#222;transform:scaleX(0.9313);">Cut: 0</span></div>
<div class="c" style="left:444.36px;top:985.78px;width:423.66px;height:209.06px"><span style="left:5.80px;top:117.16px;font:normal normal 18px/18px 'Liberation Sans';color:#222;transform:scaleX(1.1667);">-</span></div>
<div class="c" style="left:444.36px;top:985.78px;width:423.66px;height:209.06px"><span style="left:5.80px;top:138.96px;font:normal normal 18px/18px 'Liberation Sans';color:#222;transform:scaleX(1.1667);">-</span></div>
<div class="c" style="left:444.36px;top:985.78px;width:300.00px;height:184.50px"><span style="left:0.42px;top:169.98px;font:normal bold 24px/24px 'Liberation Sans';color:#222;transform:scaleX(0.9815);">Rework:</span></div>
<div class="c" style="left:444.36px;top:985.78px;width:423.66px;height:209.06px"><span style="left:6.30px;top:192.56px;font:normal normal 18px/18px 'Liberation Sans';color:#222;">-</span></div>
<div class="c" style="left:872.22px;top:985.78px;width:423.66px;height:209.06px"><span style="left:0.45px;top:8.48px;font:normal bold 24px/24px 'Liberation Sans';color:#222;transform:scaleX(0.9532);">Kill: 0</span></div>
<div class="c" style="left:872.22px;top:985.78px;width:423.66px;height:209.06px"><span style="left:0.30px;top:39.26px;font:normal normal 18px/18px 'Liberation Sans';color:#303030;transform:scaleX(1.0834);">07:30 AM - 04:00 PM</span></div>
<div class="c" style="left:872.22px;top:985.78px;width:423.66px;height:209.06px"><span style="left:0.30px;top:61.36px;font:normal normal 18px/18px 'Liberation Sans';color:#303030;transform:scaleX(1.0834);">04:30 PM - 01:00 AM</span></div>
<div class="c" style="left:872.22px;top:985.78px;width:300.00px;height:109.00px"><span style="left:1.40px;top:94.68px;font:normal bold 24px/24px 'Liberation Sans';color:#222;transform:scaleX(0.9313);">Cut: 0</span></div>
<div class="c" style="left:872.22px;top:985.78px;width:423.66px;height:209.06px"><span style="left:0.30px;top:115.76px;font:normal normal 18px/18px 'Liberation Sans';color:#303030;transform:scaleX(1.0834);">06:00 AM - 02:30 PM</span></div>
<div class="c" style="left:872.22px;top:985.78px;width:423.66px;height:209.06px"><span style="left:0.30px;top:137.56px;font:normal normal 18px/18px 'Liberation Sans';color:#303030;transform:scaleX(1.0760);">03:15 PM - 11:45 PM</span></div>
<div class="c" style="left:872.22px;top:985.78px;width:300.00px;height:184.50px"><span style="left:0.42px;top:169.98px;font:normal bold 24px/24px 'Liberation Sans';color:#222;transform:scaleX(0.9815);">Rework:</span></div>
<div class="c" style="left:872.22px;top:985.78px;width:423.66px;height:209.06px"><span style="left:6.30px;top:192.56px;font:normal normal 18px/18px 'Liberation Sans';color:#222;">-</span></div>
<div class="c" style="left:1300.08px;top:985.78px;width:423.66px;height:209.06px"><span style="left:0.45px;top:8.48px;font:normal bold 24px/24px 'Liberation Sans';color:#222;transform:scaleX(0.9532);">Kill: 0</span></div>
<div class="c" style="left:1300.08px;top:985.78px;width:423.66px;height:209.06px"><span style="left:0.30px;top:39.26px;font:normal normal 18px/18px 'Liberation Sans';color:#303030;transform:scaleX(1.0834);">07:30 AM - 04:00 PM</span></div>
<div class="c" style="left:1300.08px;top:985.78px;width:423.66px;height:209.06px"><span style="left:0.30px;top:61.36px;font:normal normal 18px/18px 'Liberation Sans';color:#303030;transform:scaleX(1.0834);">04:30 PM - 01:00 AM</span></div>
<div class="c" style="left:1300.08px;top:985.78px;width:300.00px;height:109.00px"><span style="left:1.40px;top:94.68px;font:normal bold 24px/24px 'Liberation Sans';color:#222;transform:scaleX(0.9313);">Cut: 0</span></div>
<div class="c" style="left:1300.08px;top:985.78px;width:423.66px;height:209.06px"><span style="left:0.30px;top:115.76px;font:normal normal 18px/18px 'Liberation Sans';color:#303030;transform:scaleX(1.0834);">06:00 AM - 02:30 PM</span></div>
<div class="c" style="left:1300.08px;top:985.78px;width:423.66px;height:209.06px"><span style="left:0.30px;top:137.56px;font:normal normal 18px/18px 'Liberation Sans';color:#303030;transform:scaleX(1.0760);">03:15 PM - 11:45 PM</span></div>
<div class="c" style="left:1300.08px;top:985.78px;width:300.00px;height:184.50px"><span style="left:0.42px;top:169.98px;font:normal bold 24px/24px 'Liberation Sans';color:#222;transform:scaleX(0.9815);">Rework:</span></div>
<div class="c" style="left:1300.08px;top:985.78px;width:423.66px;height:209.06px"><span style="left:6.30px;top:192.56px;font:normal normal 18px/18px 'Liberation Sans';color:#222;">-</span></div>
<div class="c" style="left:1727.94px;top:985.78px;width:423.66px;height:209.06px"><span style="left:0.45px;top:8.48px;font:normal bold 24px/24px 'Liberation Sans';color:#222;transform:scaleX(0.9532);">Kill: 0</span></div>
<div class="c" style="left:1727.94px;top:985.78px;width:423.66px;height:209.06px"><span style="left:0.30px;top:39.26px;font:normal normal 18px/18px 'Liberation Sans';color:#303030;transform:scaleX(1.0834);">07:30 AM - 04:00 PM</span></div>
<div class="c" style="left:1727.94px;top:985.78px;width:423.66px;height:209.06px"><span style="left:0.30px;top:61.36px;font:normal normal 18px/18px 'Liberation Sans';color:#303030;transform:scaleX(1.0834);">04:30 PM - 01:00 AM</span></div>
<div class="c" style="left:1727.94px;top:985.78px;width:300.00px;height:109.00px"><span style="left:1.40px;top:94.68px;font:normal bold 24px/24px 'Liberation Sans';color:#222;transform:scaleX(0.9313);">Cut: 0</span></div>
<div class="c" style="left:1727.94px;top:985.78px;width:423.66px;height:209.06px"><span style="left:0.30px;top:115.76px;font:normal normal 18px/18px 'Liberation Sans';color:#303030;transform:scaleX(1.0834);">06:00 AM - 02:30 PM</span></div>
<div class="c" style="left:1727.94px;top:985.78px;width:423.66px;height:209.06px"><span style="left:0.30px;top:137.56px;font:normal normal 18px/18px 'Liberation Sans';color:#303030;transform:scaleX(1.0760);">03:15 PM - 11:45 PM</span></div>
<div class="c" style="left:1727.94px;top:985.78px;width:300.00px;height:184.50px"><span style="left:0.42px;top:169.98px;font:normal bold 24px/24px 'Liberation Sans';color:#222;transform:scaleX(0.9815);">Rework:</span></div>
<div class="c" style="left:1727.94px;top:985.78px;width:423.66px;height:209.06px"><span style="left:6.30px;top:192.56px;font:normal normal 18px/18px 'Liberation Sans';color:#222;">-</span></div>
<div class="c" style="left:2155.80px;top:985.78px;width:423.66px;height:209.06px"><span style="left:0.45px;top:8.48px;font:normal bold 24px/24px 'Liberation Sans';color:#222;transform:scaleX(0.9532);">Kill: 0</span></div>
<div class="c" style="left:2155.80px;top:985.78px;width:423.66px;height:209.06px"><span style="left:0.30px;top:39.26px;font:normal normal 18px/18px 'Liberation Sans';color:#303030;transform:scaleX(1.0834);">07:30 AM - 04:00 PM</span></div>
<div class="c" style="left:2155.80px;top:985.78px;width:423.66px;height:209.06px"><span style="left:0.30px;top:61.36px;font:normal normal 18px/18px 'Liberation Sans';color:#303030;transform:scaleX(1.0834);">04:30 PM - 01:00 AM</span></div>
<div class="c" style="left:2155.80px;top:985.78px;width:300.00px;height:109.00px"><span style="left:1.40px;top:94.68px;font:normal bold 24px/24px 'Liberation Sans';color:#222;transform:scaleX(0.9313);">Cut: 0</span></div>
<div class="c" style="left:2155.80px;top:985.78px;width:423.66px;height:209.06px"><span style="left:0.30px;top:115.76px;font:normal normal 18px/18px 'Liberation Sans';color:#303030;transform:scaleX(1.0834);">06:00 AM - 02:30 PM</span></div>
<div class="c" style="left:2155.80px;top:985.78px;width:423.66px;height:209.06px"><span style="left:0.30px;top:137.56px;font:normal normal 18px/18px 'Liberation Sans';color:#303030;transform:scaleX(1.0760);">03:15 PM - 11:45 PM</span></div>
<div class="c" style="left:2155.80px;top:985.78px;width:300.00px;height:184.50px"><span style="left:0.42px;top:169.98px;font:normal bold 24px/24px 'Liberation Sans';color:#222;transform:scaleX(0.9815);">Rework:</span></div>
<div class="c" style="left:2155.80px;top:985.78px;width:423.66px;height:209.06px"><span style="left:6.30px;top:192.56px;font:normal normal 18px/18px 'Liberation Sans';color:#222;">-</span></div>
<div class="c" style="left:2583.66px;top:985.78px;width:423.84px;height:209.06px"><span style="left:0.45px;top:8.48px;font:normal bold 24px/24px 'Liberation Sans';color:#222;transform:scaleX(0.9532);">Kill: 0</span></div>
<div class="c" style="left:2583.66px;top:985.78px;width:423.84px;height:209.06px"><span style="left:0.30px;top:39.26px;font:normal normal 18px/18px 'Liberation Sans';color:#303030;transform:scaleX(1.0834);">07:30 AM - 04:00 PM</span></div>
<div class="c" style="left:2583.66px;top:985.78px;width:423.84px;height:209.06px"><span style="left:0.30px;top:61.36px;font:normal normal 18px/18px 'Liberation Sans';color:#303030;transform:scaleX(1.0834);">04:30 PM - 01:00 AM</span></div>
<div class="c" style="left:2583.66px;top:985.78px;width:300.00px;height:109.00px"><span style="left:1.40px;top:94.68px;font:normal bold 24px/24px 'Liberation Sans';color:#222;transform:scaleX(0.9313);">Cut: 0</span></div>
<div class="c" style="left:2583.66px;top:985.78px;width:423.84px;height:209.06px"><span style="left:0.30px;top:115.76px;font:normal normal 18px/18px 'Liberation Sans';color:#303030;transform:scaleX(1.0834);">06:00 AM - 02:30 PM</span></div>
<div class="c" style="left:2583.66px;top:985.78px;width:423.84px;height:209.06px"><span style="left:0.30px;top:137.56px;font:normal normal 18px/18px 'Liberation Sans';color:#303030;transform:scaleX(1.0760);">03:15 PM - 11:45 PM</span></div>
<div class="c" style="left:2583.66px;top:985.78px;width:300.00px;height:184.50px"><span style="left:0.42px;top:169.98px;font:normal bold 24px/24px 'Liberation Sans';color:#222;transform:scaleX(0.9815);">Rework:</span></div>
<div class="c" style="left:2583.66px;top:985.78px;width:423.84px;height:209.06px"><span style="left:6.30px;top:192.56px;font:normal normal 18px/18px 'Liberation Sans';color:#222;">-</span></div>
<div class="c" style="left:444.36px;top:1225.04px;width:423.66px;height:209.06px"><span style="left:0.45px;top:8.48px;font:normal bold 24px/24px 'Liberation Sans';color:#222;transform:scaleX(0.9532);">Kill: 0</span></div>
<div class="c" style="left:444.36px;top:1225.04px;width:423.66px;height:209.06px"><span style="left:0.30px;top:39.26px;font:normal normal 18px/18px 'Liberation Sans';color:#303030;transform:scaleX(1.0834);">07:30 AM - 04:00 PM</span></div>
<div class="c" style="left:444.36px;top:1225.04px;width:423.66px;height:209.06px"><span style="left:0.30px;top:61.36px;font:normal normal 18px/18px 'Liberation Sans';color:#303030;transform:scaleX(1.0834);">04:30 PM - 01:00 AM</span></div>
<div class="c" style="left:444.36px;top:1225.04px;width:300.00px;height:109.00px"><span style="left:1.40px;top:94.68px;font:normal bold 24px/24px 'Liberation Sans';color:#222;transform:scaleX(0.9313);">Cut: 0</span></div>
<div class="c" style="left:444.36px;top:1225.04px;width:423.66px;height:209.06px"><span style="left:0.30px;top:115.76px;font:normal normal 18px/18px 'Liberation Sans';color:#303030;transform:scaleX(1.0834);">06:00 AM - 02:30 PM</span></div>
<div class="c" style="left:444.36px;top:1225.04px;width:423.66px;height:209.06px"><span style="left:0.30px;top:137.56px;font:normal normal 18px/18px 'Liberation Sans';color:#303030;transform:scaleX(1.0760);">03:15 PM - 11:45 PM</span></div>
<div class="c" style="left:444.36px;top:1225.04px;width:300.00px;height:184.50px"><span style="left:0.42px;top:169.98px;font:normal bold 24px/24px 'Liberation Sans';color:#222;transform:scaleX(0.9815);">Rework:</span></div>
<div class="c" style="left:444.36px;top:1225.04px;width:423.66px;height:209.06px"><span style="left:6.30px;top:192.56px;font:normal normal 18px/18px 'Liberation Sans';color:#222;">-</span></div>
<div class="c" style="left:872.22px;top:1225.04px;width:423.66px;height:209.06px"><span style="left:0.45px;top:8.48px;font:normal bold 24px/24px 'Liberation Sans';color:#222;transform:scaleX(0.9532);">Kill: 0</span></div>
<div class="c" style="left:872.22px;top:1225.04px;width:423.66px;height:209.06px"><span style="left:0.30px;top:39.26px;font:normal normal 18px/18px 'Liberation Sans';color:#303030;transform:scaleX(1.0834);">07:30 AM - 04:00 PM</span></div>
<div class="c" style="left:872.22px;top:1225.04px;width:423.66px;height:209.06px"><span style="left:0.30px;top:61.36px;font:normal normal 18px/18px 'Liberation Sans';color:#303030;transform:scaleX(1.0834);">04:30 PM - 01:00 AM</span></div>
<div class="c" style="left:872.22px;top:1225.04px;width:300.00px;height:109.00px"><span style="left:1.40px;top:94.68px;font:normal bold 24px/24px 'Liberation Sans';color:#222;transform:scaleX(0.9313);">Cut: 0</span></div>
<div class="c" style="left:872.22px;top:1225.04px;width:423.66px;height:209.06px"><span style="left:0.30px;top:115.76px;font:normal normal 18px/18px 'Liberation Sans';color:#303030;transform:scaleX(1.0834);">06:00 AM - 02:30 PM</span></div>
<div class="c" style="left:872.22px;top:1225.04px;width:423.66px;height:209.06px"><span style="left:0.30px;top:137.56px;font:normal normal 18px/18px 'Liberation Sans';color:#303030;transform:scaleX(1.0760);">03:15 PM - 11:45 PM</span></div>
<div class="c" style="left:872.22px;top:1225.04px;width:300.00px;height:184.50px"><span style="left:0.42px;top:169.98px;font:normal bold 24px/24px 'Liberation Sans';color:#222;transform:scaleX(0.9815);">Rework:</span></div>
<div class="c" style="left:872.22px;top:1225.04px;width:423.66px;height:209.06px"><span style="left:6.30px;top:192.56px;font:normal normal 18px/18px 'Liberation Sans';color:#222;">-</span></div>
<div class="c" style="left:1300.08px;top:1225.04px;width:423.66px;height:209.06px"><span style="left:0.45px;top:8.48px;font:normal bold 24px/24px 'Liberation Sans';color:#222;transform:scaleX(0.9532);">Kill: 0</span></div>
<div class="c" style="left:1300.08px;top:1225.04px;width:423.66px;height:209.06px"><span style="left:0.30px;top:39.26px;font:normal normal 18px/18px 'Liberation Sans';color:#303030;transform:scaleX(1.0834);">07:30 AM - 04:00 PM</span></div>
<div class="c" style="left:1300.08px;top:1225.04px;width:423.66px;height:209.06px"><span style="left:0.30px;top:61.36px;font:normal normal 18px/18px 'Liberation Sans';color:#303030;transform:scaleX(1.0834);">04:30 PM - 01:00 AM</span></div>
<div class="c" style="left:1300.08px;top:1225.04px;width:300.00px;height:109.00px"><span style="left:1.40px;top:94.68px;font:normal bold 24px/24px 'Liberation Sans';color:#222;transform:scaleX(0.9313);">Cut: 0</span></div>
<div class="c" style="left:1300.08px;top:1225.04px;width:423.66px;height:209.06px"><span style="left:0.30px;top:115.76px;font:normal normal 18px/18px 'Liberation Sans';color:#303030;transform:scaleX(1.0834);">06:00 AM - 02:30 PM</span></div>
<div class="c" style="left:1300.08px;top:1225.04px;width:423.66px;height:209.06px"><span style="left:0.30px;top:137.56px;font:normal normal 18px/18px 'Liberation Sans';color:#303030;transform:scaleX(1.0760);">03:15 PM - 11:45 PM</span></div>
<div class="c" style="left:1300.08px;top:1225.04px;width:300.00px;height:184.50px"><span style="left:0.42px;top:169.98px;font:normal bold 24px/24px 'Liberation Sans';color:#222;transform:scaleX(0.9815);">Rework:</span></div>
<div class="c" style="left:1300.08px;top:1225.04px;width:423.66px;height:209.06px"><span style="left:6.30px;top:192.56px;font:normal normal 18px/18px 'Liberation Sans';color:#222;">-</span></div>
<div class="c" style="left:1727.94px;top:1225.04px;width:423.66px;height:209.06px"><span style="left:0.45px;top:8.48px;font:normal bold 24px/24px 'Liberation Sans';color:#222;transform:scaleX(0.9532);">Kill: 0</span></div>
<div class="c" style="left:1727.94px;top:1225.04px;width:423.66px;height:209.06px"><span style="left:0.30px;top:39.26px;font:normal normal 18px/18px 'Liberation Sans';color:#303030;transform:scaleX(1.0834);">07:30 AM - 04:00 PM</span></div>
<div class="c" style="left:1727.94px;top:1225.04px;width:423.66px;height:209.06px"><span style="left:0.30px;top:61.36px;font:normal normal 18px/18px 'Liberation Sans';color:#303030;transform:scaleX(1.0834);">04:30 PM - 01:00 AM</span></div>
<div class="c" style="left:1727.94px;top:1225.04px;width:300.00px;height:109.00px"><span style="left:1.40px;top:94.68px;font:normal bold 24px/24px 'Liberation Sans';color:#222;transform:scaleX(0.9313);">Cut: 0</span></div>
<div class="c" style="left:1727.94px;top:1225.04px;width:423.66px;height:209.06px"><span style="left:0.30px;top:115.76px;font:normal normal 18px/18px 'Liberation Sans';color:#303030;transform:scaleX(1.0834);">06:00 AM - 02:30 PM</span></div>
<div class="c" style="left:1727.94px;top:1225.04px;width:423.66px;height:209.06px"><span style="left:0.30px;top:137.56px;font:normal normal 18px/18px 'Liberation Sans';color:#303030;transform:scaleX(1.0760);">03:15 PM - 11:45 PM</span></div>
<div class="c" style="left:1727.94px;top:1225.04px;width:300.00px;height:184.50px"><span style="left:0.42px;top:169.98px;font:normal bold 24px/24px 'Liberation Sans';color:#222;transform:scaleX(0.9815);">Rework:</span></div>
<div class="c" style="left:1727.94px;top:1225.04px;width:423.66px;height:209.06px"><span style="left:6.30px;top:192.56px;font:normal normal 18px/18px 'Liberation Sans';color:#222;">-</span></div>
<div class="c" style="left:2155.80px;top:1225.04px;width:423.66px;height:209.06px"><span style="left:0.45px;top:8.48px;font:normal bold 24px/24px 'Liberation Sans';color:#222;transform:scaleX(0.9532);">Kill: 0</span></div>
<div class="c" style="left:2155.80px;top:1225.04px;width:423.66px;height:209.06px"><span style="left:0.30px;top:39.26px;font:normal normal 18px/18px 'Liberation Sans';color:#303030;transform:scaleX(1.0834);">07:30 AM - 04:00 PM</span></div>
<div class="c" style="left:2155.80px;top:1225.04px;width:423.66px;height:209.06px"><span style="left:0.30px;top:61.36px;font:normal normal 18px/18px 'Liberation Sans';color:#303030;transform:scaleX(1.0834);">04:30 PM - 01:00 AM</span></div>
<div class="c" style="left:2155.80px;top:1225.04px;width:300.00px;height:109.00px"><span style="left:1.40px;top:94.68px;font:normal bold 24px/24px 'Liberation Sans';color:#222;transform:scaleX(0.9313);">Cut: 0</span></div>
<div class="c" style="left:2155.80px;top:1225.04px;width:423.66px;height:209.06px"><span style="left:0.30px;top:115.76px;font:normal normal 18px/18px 'Liberation Sans';color:#303030;transform:scaleX(1.0834);">06:00 AM - 02:30 PM</span></div>
<div class="c" style="left:2155.80px;top:1225.04px;width:423.66px;height:209.06px"><span style="left:0.30px;top:137.56px;font:normal normal 18px/18px 'Liberation Sans';color:#303030;transform:scaleX(1.0760);">03:15 PM - 11:45 PM</span></div>
<div class="c" style="left:2155.80px;top:1225.04px;width:300.00px;height:184.50px"><span style="left:0.42px;top:169.98px;font:normal bold 24px/24px 'Liberation Sans';color:#222;transform:scaleX(0.9815);">Rework:</span></div>
<div class="c" style="left:2155.80px;top:1225.04px;width:423.66px;height:209.06px"><span style="left:6.30px;top:192.56px;font:normal normal 18px/18px 'Liberation Sans';color:#222;">-</span></div>
<div class="c" style="left:444.36px;top:1464.30px;width:423.66px;height:209.50px"><span style="left:0.45px;top:8.48px;font:normal bold 24px/24px 'Liberation Sans';color:#222;transform:scaleX(0.9532);">Kill: 0</span></div>
<div class="c" style="left:444.36px;top:1464.30px;width:423.66px;height:209.50px"><span style="left:0.30px;top:39.26px;font:normal normal 18px/18px 'Liberation Sans';color:#303030;transform:scaleX(1.0834);">07:30 AM - 04:00 PM</span></div>
<div class="c" style="left:444.36px;top:1464.30px;width:423.66px;height:209.50px"><span style="left:0.30px;top:61.36px;font:normal normal 18px/18px 'Liberation Sans';color:#303030;transform:scaleX(1.0834);">04:30 PM - 01:00 AM</span></div>
<div class="c" style="left:444.36px;top:1464.30px;width:300.00px;height:109.00px"><span style="left:1.40px;top:94.68px;font:normal bold 24px/24px 'Liberation Sans';color:#222;transform:scaleX(0.9313);">Cut: 0</span></div>
<div class="c" style="left:444.36px;top:1464.30px;width:423.66px;height:209.50px"><span style="left:0.30px;top:115.76px;font:normal normal 18px/18px 'Liberation Sans';color:#303030;transform:scaleX(1.0834);">06:00 AM - 02:30 PM</span></div>
<div class="c" style="left:444.36px;top:1464.30px;width:423.66px;height:209.50px"><span style="left:0.30px;top:137.56px;font:normal normal 18px/18px 'Liberation Sans';color:#303030;transform:scaleX(1.0760);">03:15 PM - 11:45 PM</span></div>
<div class="c" style="left:444.36px;top:1464.30px;width:300.00px;height:184.50px"><span style="left:0.42px;top:169.98px;font:normal bold 24px/24px 'Liberation Sans';color:#222;transform:scaleX(0.9815);">Rework:</span></div>
<div class="c" style="left:444.36px;top:1464.30px;width:423.66px;height:209.50px"><span style="left:6.30px;top:192.56px;font:normal normal 18px/18px 'Liberation Sans';color:#222;">-</span></div>
<div class="c" style="left:872.22px;top:1464.30px;width:423.66px;height:209.50px"><span style="left:0.45px;top:8.48px;font:normal bold 24px/24px 'Liberation Sans';color:#222;transform:scaleX(0.9532);">Kill: 0</span></div>
<div class="c" style="left:872.22px;top:1464.30px;width:423.66px;height:209.50px"><span style="left:0.30px;top:39.26px;font:normal normal 18px/18px 'Liberation Sans';color:#303030;transform:scaleX(1.0834);">07:30 AM - 04:00 PM</span></div>
<div class="c" style="left:872.22px;top:1464.30px;width:423.66px;height:209.50px"><span style="left:0.30px;top:61.36px;font:normal normal 18px/18px 'Liberation Sans';color:#303030;transform:scaleX(1.0834);">04:30 PM - 01:00 AM</span></div>
<div class="c" style="left:872.22px;top:1464.30px;width:300.00px;height:109.00px"><span style="left:1.40px;top:94.68px;font:normal bold 24px/24px 'Liberation Sans';color:#222;transform:scaleX(0.9313);">Cut: 0</span></div>
<div class="c" style="left:872.22px;top:1464.30px;width:423.66px;height:209.50px"><span style="left:0.30px;top:115.76px;font:normal normal 18px/18px 'Liberation Sans';color:#303030;transform:scaleX(1.0834);">06:00 AM - 02:30 PM</span></div>
<div class="c" style="left:872.22px;top:1464.30px;width:423.66px;height:209.50px"><span style="left:0.30px;top:137.56px;font:normal normal 18px/18px 'Liberation Sans';color:#303030;transform:scaleX(1.0760);">03:15 PM - 11:45 PM</span></div>
<div class="c" style="left:872.22px;top:1464.30px;width:300.00px;height:184.50px"><span style="left:0.42px;top:169.98px;font:normal bold 24px/24px 'Liberation Sans';color:#222;transform:scaleX(0.9815);">Rework:</span></div>
<div class="c" style="left:872.22px;top:1464.30px;width:423.66px;height:209.50px"><span style="left:6.30px;top:192.56px;font:normal normal 18px/18px 'Liberation Sans';color:#222;">-</span></div>
<div class="c" style="left:1300.08px;top:1464.30px;width:423.66px;height:209.50px"><span style="left:0.45px;top:8.48px;font:normal bold 24px/24px 'Liberation Sans';color:#222;transform:scaleX(0.9532);">Kill: 0</span></div>
<div class="c" style="left:1300.08px;top:1464.30px;width:423.66px;height:209.50px"><span style="left:0.30px;top:39.26px;font:normal normal 18px/18px 'Liberation Sans';color:#303030;transform:scaleX(1.0834);">07:30 AM - 04:00 PM</span></div>
<div class="c" style="left:1300.08px;top:1464.30px;width:423.66px;height:209.50px"><span style="left:0.30px;top:61.36px;font:normal normal 18px/18px 'Liberation Sans';color:#303030;transform:scaleX(1.0834);">04:30 PM - 01:00 AM</span></div>
<div class="c" style="left:1300.08px;top:1464.30px;width:300.00px;height:109.00px"><span style="left:1.40px;top:94.68px;font:normal bold 24px/24px 'Liberation Sans';color:#222;transform:scaleX(0.9313);">Cut: 0</span></div>
<div class="c" style="left:1300.08px;top:1464.30px;width:423.66px;height:209.50px"><span style="left:0.30px;top:115.76px;font:normal normal 18px/18px 'Liberation Sans';color:#303030;transform:scaleX(1.0834);">06:00 AM - 02:30 PM</span></div>
<div class="c" style="left:1300.08px;top:1464.30px;width:423.66px;height:209.50px"><span style="left:0.30px;top:137.56px;font:normal normal 18px/18px 'Liberation Sans';color:#303030;transform:scaleX(1.0760);">03:15 PM - 11:45 PM</span></div>
<div class="c" style="left:1300.08px;top:1464.30px;width:300.00px;height:184.50px"><span style="left:0.42px;top:169.98px;font:normal bold 24px/24px 'Liberation Sans';color:#222;transform:scaleX(0.9815);">Rework:</span></div>
<div class="c" style="left:1300.08px;top:1464.30px;width:423.66px;height:209.50px"><span style="left:6.30px;top:192.56px;font:normal normal 18px/18px 'Liberation Sans';color:#222;">-</span></div>
<div class="c" style="left:1727.94px;top:1464.30px;width:423.66px;height:209.50px"><span style="left:0.45px;top:8.48px;font:normal bold 24px/24px 'Liberation Sans';color:#222;transform:scaleX(0.9532);">Kill: 0</span></div>
<div class="c" style="left:1727.94px;top:1464.30px;width:423.66px;height:209.50px"><span style="left:0.30px;top:39.26px;font:normal normal 18px/18px 'Liberation Sans';color:#303030;transform:scaleX(1.0834);">07:30 AM - 04:00 PM</span></div>
<div class="c" style="left:1727.94px;top:1464.30px;width:423.66px;height:209.50px"><span style="left:0.30px;top:61.36px;font:normal normal 18px/18px 'Liberation Sans';color:#303030;transform:scaleX(1.0834);">04:30 PM - 01:00 AM</span></div>
<div class="c" style="left:1727.94px;top:1464.30px;width:300.00px;height:109.00px"><span style="left:1.40px;top:94.68px;font:normal bold 24px/24px 'Liberation Sans';color:#222;transform:scaleX(0.9313);">Cut: 0</span></div>
<div class="c" style="left:1727.94px;top:1464.30px;width:423.66px;height:209.50px"><span style="left:0.30px;top:115.76px;font:normal normal 18px/18px 'Liberation Sans';color:#303030;transform:scaleX(1.0834);">06:00 AM - 02:30 PM</span></div>
<div class="c" style="left:1727.94px;top:1464.30px;width:423.66px;height:209.50px"><span style="left:0.30px;top:137.56px;font:normal normal 18px/18px 'Liberation Sans';color:#303030;transform:scaleX(1.0760);">03:15 PM - 11:45 PM</span></div>
<div class="c" style="left:1727.94px;top:1464.30px;width:300.00px;height:184.50px"><span style="left:0.42px;top:169.98px;font:normal bold 24px/24px 'Liberation Sans';color:#222;transform:scaleX(0.9815);">Rework:</span></div>
<div class="c" style="left:1727.94px;top:1464.30px;width:423.66px;height:209.50px"><span style="left:6.30px;top:192.56px;font:normal normal 18px/18px 'Liberation Sans';color:#222;">-</span></div>
<div class="c" style="left:2155.80px;top:1464.30px;width:423.66px;height:209.50px"><span style="left:0.45px;top:8.48px;font:normal bold 24px/24px 'Liberation Sans';color:#222;transform:scaleX(0.9532);">Kill: 0</span></div>
<div class="c" style="left:2155.80px;top:1464.30px;width:423.66px;height:209.50px"><span style="left:0.30px;top:39.26px;font:normal normal 18px/18px 'Liberation Sans';color:#303030;transform:scaleX(1.0834);">07:30 AM - 04:00 PM</span></div>
<div class="c" style="left:2155.80px;top:1464.30px;width:423.66px;height:209.50px"><span style="left:0.30px;top:61.36px;font:normal normal 18px/18px 'Liberation Sans';color:#303030;transform:scaleX(1.0834);">04:30 PM - 01:00 AM</span></div>
<div class="c" style="left:2155.80px;top:1464.30px;width:300.00px;height:109.00px"><span style="left:1.40px;top:94.68px;font:normal bold 24px/24px 'Liberation Sans';color:#222;transform:scaleX(0.9313);">Cut: 0</span></div>
<div class="c" style="left:2155.80px;top:1464.30px;width:423.66px;height:209.50px"><span style="left:0.30px;top:115.76px;font:normal normal 18px/18px 'Liberation Sans';color:#303030;transform:scaleX(1.0834);">06:00 AM - 02:30 PM</span></div>
<div class="c" style="left:2155.80px;top:1464.30px;width:423.66px;height:209.50px"><span style="left:0.30px;top:137.56px;font:normal normal 18px/18px 'Liberation Sans';color:#303030;transform:scaleX(1.0760);">03:15 PM - 11:45 PM</span></div>
<div class="c" style="left:2155.80px;top:1464.30px;width:300.00px;height:184.50px"><span style="left:0.42px;top:169.98px;font:normal bold 24px/24px 'Liberation Sans';color:#222;transform:scaleX(0.9815);">Rework:</span></div>
<div class="c" style="left:2155.80px;top:1464.30px;width:423.66px;height:209.50px"><span style="left:6.30px;top:192.56px;font:normal normal 18px/18px 'Liberation Sans';color:#222;">-</span></div>
<div style="position:absolute;left:1212px;top:508.3px;width:599.5px;height:697px;background:#fff;border-bottom:1.5px solid #d6dcd9;box-sizing:border-box"></div>
<div style="position:absolute;left:1212px;top:508.3px;width:599.5px;height:55.7px;background:#517eb0;border-radius:8px 8px 0 0"></div>
<span style="left:1221.87px;top:521.86px;font:normal bold 31px/31px 'Liberation Sans';color:#fff;transform:scaleX(1.0308);">Create Calendar Note</span>
<span style="left:1232.61px;top:570.88px;font:normal bold 22px/22px 'Liberation Sans';color:#111;transform:scaleX(1.0891);">Date *</span>
<div style="position:absolute;left:1232.2px;top:608.3px;width:559.4px;height:45.5px;box-sizing:border-box;border:2px solid #a3abb5;border-left-color:#77828f;border-right-color:#7d8896;border-radius:2px;background:#fff"></div>
<span style="left:1242.00px;top:620.13px;font:normal normal 23px/23px 'Liberation Sans';color:#333;transform:scaleX(1.0807);">03/11/2025</span>
<svg style="position:absolute;left:1740px;top:614px" width="40" height="36" viewBox="0 0 40 36">
<defs><linearGradient id="cg" x1="0" y1="0" x2="0" y2="1"><stop offset="0" stop-color="#fff"/><stop offset="0.6" stop-color="#f2f2f2"/><stop offset="1" stop-color="#c9c9c9"/></linearGradient></defs>
<rect x="0.5" y="0.5" width="39" height="35" rx="3" fill="#a8a8a8"/>
<rect x="3.5" y="9.5" width="33" height="24" fill="url(#cg)"/>
<rect x="2" y="1.8" width="36" height="6.6" fill="#6b9ad6"/>
<rect x="2" y="8.2" width="36" height="1.6" fill="#4a4a4a"/>
<circle cx="20" cy="5" r="2.6" fill="#fff"/>
</svg>
<span style="left:1747.18px;top:626.97px;font:normal bold 20px/20px 'Liberation Sans';color:#2a2a2a;transform:scaleX(1.1220);">15</span>
<span style="left:1233.70px;top:681.18px;font:normal bold 22px/22px 'Liberation Sans';color:#111;transform:scaleX(1.0844);">Title *</span>
<span style="left:1234.90px;top:716.21px;font:normal normal 17px/17px 'Liberation Sans';color:#222;transform:scaleX(1.1298);">50 characters max.</span>
<span style="left:1741.53px;top:716.91px;font:normal normal 17px/17px 'Liberation Sans';color:#222;transform:scaleX(1.1731);">15/50</span>
<div style="position:absolute;left:1232.2px;top:748.3px;width:559.6px;height:45.6px;box-sizing:border-box;border:2px solid #adafb4;border-radius:2px;background:#fff"></div>
<span style="left:1238.50px;top:753.93px;font:normal normal 23px/23px 'Liberation Sans';color:#222;transform:scaleX(1.0611);">30 Min Downtime</span>
<span style="left:1232.57px;top:819.08px;font:normal bold 22px/22px 'Liberation Sans';color:#111;transform:scaleX(1.1270);">Note *</span>
<span style="left:1234.90px;top:853.31px;font:normal normal 17px/17px 'Liberation Sans';color:#222;transform:scaleX(1.1260);">500 characters max.</span>
<span style="left:1730.70px;top:853.31px;font:normal normal 17px/17px 'Liberation Sans';color:#222;transform:scaleX(1.1680);">79/500</span>
<div style="position:absolute;left:1232px;top:885.8px;width:559.6px;height:220.3px;box-sizing:border-box;border:2px solid #6d9ee2;border-radius:2px;background:#fff"></div>
<span style="left:1238.50px;top:894.23px;font:normal normal 23px/23px 'Liberation Sans';color:#222;transform:scaleX(1.0574);">There will be 30 min of downtime on the cut floor</span>
<span style="left:1238.50px;top:926.03px;font:normal normal 23px/23px 'Liberation Sans';color:#222;transform:scaleX(1.0359);">due to scheduled maintenance.</span>
<div style="position:absolute;left:1344.9px;top:1103.8px;width:232.5px;height:92.7px;box-sizing:border-box;border:10px solid #d0361f;background:#fff"></div>
<div style="position:absolute;left:1361.7px;top:1125.5px;width:199.8px;height:50px;box-sizing:border-box;border:2px solid #727272;border-radius:2px;background:#dddddd"></div>
<div style="position:absolute;left:1582.2px;top:1125.5px;width:199.8px;height:50px;box-sizing:border-box;border:2px solid #727272;border-radius:2px;background:#dddddd"></div>
<span style="left:1445.75px;top:1140.23px;font:normal normal 23px/23px 'Liberation Sans';color:#222;transform:scaleX(0.9517);">OK</span>
<span style="left:1645.50px;top:1140.23px;font:normal normal 23px/23px 'Liberation Sans';color:#222;transform:scaleX(1.0031);">Cancel</span>
</body></html>
